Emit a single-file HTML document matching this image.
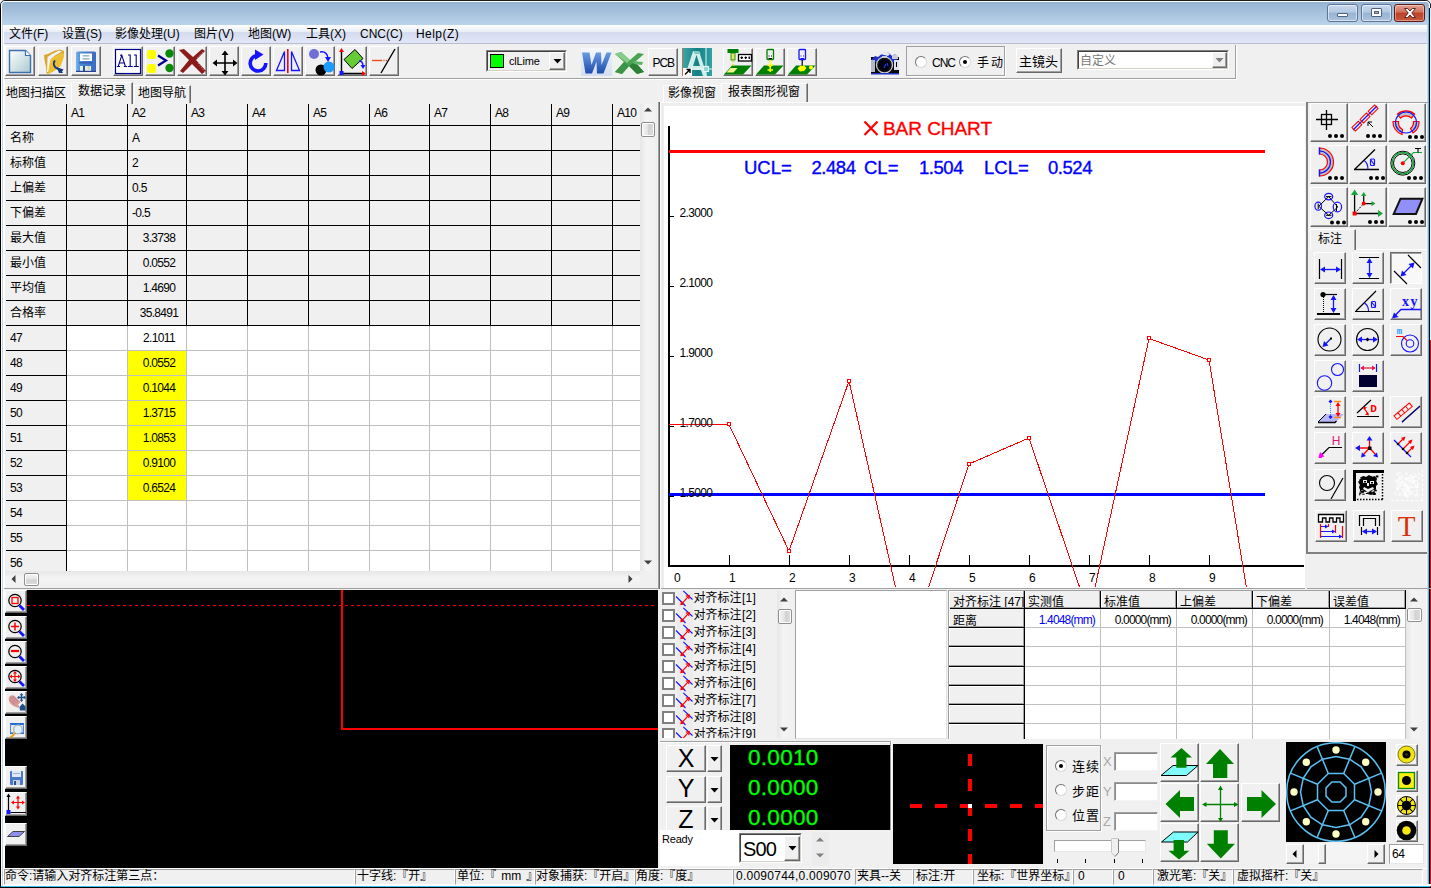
<!DOCTYPE html>
<html lang="zh"><head><meta charset="utf-8"><title>Measurement</title>
<style>
html,body{margin:0;padding:0}
body{width:1431px;height:888px;overflow:hidden;position:relative;background:#f0f0f0;font-family:"Liberation Sans","Noto Sans CJK SC",sans-serif;font-size:12px;color:#000}
body div{position:absolute;box-sizing:border-box}
svg{position:absolute;overflow:visible}
.t{white-space:nowrap}
.btn{background:#f0f0f0;border:1px solid;border-color:#fff #696969 #696969 #fff;box-shadow:inset -1px -1px 0 #a0a0a0}
.sunk{border:1px solid;border-color:#a0a0a0 #fff #fff #a0a0a0}

</style></head>
<body>
<!-- window frame -->
<div style="left:0px;top:0px;width:1431px;height:888px;background:#bad2ea;border-radius:5px 5px 0 0;border:1px solid #1a1c1e;"></div>
<div style="left:1px;top:1px;width:1429px;height:886px;border-radius:4px 4px 0 0;border:1px solid #fff;background:linear-gradient(#95b3d2 0,#a8c2dd 11px,#bad2ea 23px,#bad2ea 100%);"></div>
<div style="left:3px;top:25px;width:1424px;height:861px;background:#f0f0f0;"></div>
<div style="left:1426px;top:25px;width:1px;height:861px;background:#f8f9fd;"></div>
<div style="left:1427px;top:25px;width:1px;height:861px;background:#ccd6ec;"></div>
<div style="left:1428px;top:8px;width:1px;height:880px;background:#38c4f2;"></div>
<div style="left:1429px;top:8px;width:1px;height:880px;background:#000;"></div>
<div style="left:1430px;top:8px;width:1px;height:332px;background:#e8eef8;"></div>
<div style="left:1430px;top:340px;width:1px;height:548px;background:#f00000;"></div>
<div style="left:0px;top:884px;width:1431px;height:2px;background:#fff;"></div>
<div style="left:0px;top:886px;width:1430px;height:1px;background:#38c4f2;"></div>
<div style="left:0px;top:887px;width:1431px;height:1px;background:#000;"></div>
<div style="left:0px;top:8px;width:1px;height:880px;background:#000;"></div>
<div style="left:1px;top:8px;width:1px;height:878px;background:#fff;"></div>
<div style="left:2px;top:25px;width:1px;height:861px;background:#c2d4ea;"></div>
<div style="left:3px;top:25px;width:2px;height:861px;background:#fff;"></div>
<div style="left:1327px;top:4px;width:31px;height:18px;border:1px solid #5d7594;border-radius:3px;background:linear-gradient(#c9d9ec 0,#b3c8e2 45%,#98b3d4 50%,#a9c2df 100%);box-shadow:inset 0 0 0 1px rgba(255,255,255,.55);"></div>
<div style="left:1337px;top:13px;width:11px;height:4px;background:#fafcff;border:1px solid #51627a;border-radius:1px;"></div>
<div style="left:1361px;top:4px;width:31px;height:18px;border:1px solid #5d7594;border-radius:3px;background:linear-gradient(#c9d9ec 0,#b3c8e2 45%,#98b3d4 50%,#a9c2df 100%);box-shadow:inset 0 0 0 1px rgba(255,255,255,.55);"></div>
<div style="left:1371px;top:8px;width:11px;height:9px;background:#fafcff;border:1px solid #51627a;border-radius:1px;"></div>
<div style="left:1374px;top:11px;width:5px;height:3px;background:#9fb6d3;border:1px solid #51627a;"></div>
<div style="left:1394px;top:4px;width:31px;height:18px;border:1px solid #5b1c14;border-radius:3px;background:linear-gradient(#e2a193 0,#d0705c 45%,#bd4027 50%,#c9583b 100%);box-shadow:inset 0 0 0 1px rgba(255,255,255,.4);"></div>
<svg style="left:1402px;top:7px" width="16" height="12" viewBox="0 0 16 12"><path d="M2.5 1.5h3.2L8 4l2.3-2.5h3.2L9.8 6l3.7 4.5h-3.2L8 8 5.700 10.500H2.500L6.200 6z" fill="#fff" stroke="#5a2a22" stroke-width="1"/></svg>
<!-- menu bar -->
<div style="left:4px;top:25px;width:1423px;height:19px;background:linear-gradient(#fefeff 0,#e9eef6 7px,#d4dbee 7px,#e2e7f8 18px,#b9bdd0 18px,#b9bdd0 19px);"></div>
<div class="t m" style="left:9px;top:27px;font-size:12px;line-height:14px;line-height:15px;">文件(F)</div>
<div class="t m" style="left:62px;top:27px;font-size:12px;line-height:14px;line-height:15px;">设置(S)</div>
<div class="t m" style="left:115px;top:27px;font-size:12px;line-height:14px;line-height:15px;">影像处理(U)</div>
<div class="t m" style="left:194px;top:27px;font-size:12px;line-height:14px;line-height:15px;">图片(V)</div>
<div class="t m" style="left:248px;top:27px;font-size:12px;line-height:14px;line-height:15px;">地图(W)</div>
<div class="t m" style="left:306px;top:27px;font-size:12px;line-height:14px;line-height:15px;">工具(X)</div>
<div class="t m" style="left:360px;top:27px;font-size:12px;line-height:14px;line-height:15px;">CNC(C)</div>
<div class="t m" style="left:416px;top:27px;font-size:12px;line-height:14px;line-height:15px;letter-spacing:0.45px;">Help(Z)</div>
<!-- toolbar -->
<div style="left:4px;top:78px;width:1232px;height:1px;background:#a0a0a0;"></div>
<div style="left:4px;top:79px;width:1232px;height:1px;background:#fff;"></div>
<div style="left:1235px;top:45px;width:1px;height:34px;background:#a0a0a0;"></div>
<div style="left:1236px;top:45px;width:1px;height:35px;background:#fff;"></div>
<div class="btn" style="left:5px;top:46px;width:30px;height:30px;"></div>
<svg style="left:5px;top:46px" width="30" height="30" viewBox="0 0 30 30"><defs><linearGradient id="gnew" x1="0" y1="0" x2="1" y2="1"><stop offset="0" stop-color="#fff"/><stop offset="1" stop-color="#a9c9cf"/></linearGradient></defs><path d="M4.500 4.500H20.500L25.500 9.500V26.500H4.500Z" fill="url(#gnew)" stroke="#3b6fae" stroke-width="1.4"/><path d="M20.500 4.500V9.500H25.500" fill="#fff" stroke="#3b6fae" stroke-width="1.2"/></svg>
<div class="btn" style="left:38px;top:46px;width:30px;height:30px;"></div>
<svg style="left:38px;top:46px" width="30" height="30" viewBox="0 0 30 30"><path d="M6 9L10 8L16 5L22 3.500L26 5L25.500 12L22.500 20L16 25L10 28L8.500 27L8 21L6.500 14Z" fill="#dca528"/><path d="M9.500 11L14 8L21 4.500L24 5.500L17 9.500L13 13L10.500 26L9 26Z" fill="#eef4fb"/><path d="M12.500 13.500L18 10L24 7L25.500 8L25 13L22 20L16 25L10 28L11 20Z" fill="#f0c634"/><path d="M14 14L24 8.500L24.500 12L21.500 19L15 24.500L11 26.500Z" fill="#e9b92c" opacity=".7"/><path d="M17 14.500C14.500 17 15.500 21 20 23" fill="none" stroke="#173a85" stroke-width="2"/><path d="M18.500 21L25.500 23.500L24 25.500L25 27L21 27L20 24.500Z" fill="#173a85"/></svg>
<div class="btn" style="left:71px;top:46px;width:30px;height:30px;"></div>
<svg style="left:71px;top:46px" width="30" height="30" viewBox="0 0 30 30"><defs><linearGradient id="gsv" x1="0" y1="0" x2="1" y2="0"><stop offset="0" stop-color="#74b4ee"/><stop offset=".25" stop-color="#4a86d4"/><stop offset="1" stop-color="#3a6cc4"/></linearGradient></defs><rect x="5" y="5.500" width="20" height="20.500" rx="1.500" fill="url(#gsv)"/><rect x="9" y="7.500" width="12" height="7.500" fill="#fff"/><rect x="11.500" y="9" width="7" height="1.600" fill="#9fbcc4"/><rect x="11.500" y="12" width="7" height="1.600" fill="#9fbcc4"/><rect x="8" y="16" width="14" height="1.500" fill="#3560b4"/><rect x="9" y="20" width="11" height="5" fill="#e8efe0"/><rect x="12" y="20" width="2" height="6" fill="#2456b0"/><rect x="16.500" y="20" width="2.500" height="4" fill="#d6d8b0"/><rect x="5" y="24.800" width="20" height="1.200" fill="#2a3f90"/></svg>
<div class="btn" style="left:113px;top:46px;width:30px;height:30px;"></div>
<svg style="left:113px;top:46px" width="30" height="30" viewBox="0 0 30 30"><rect x="2.500" y="3.500" width="25" height="24" fill="#fff" stroke="#00008b" stroke-width="1.200"/><path d="M5.200 20.500L8.800 9.200L12.400 20.500M6.500 17H11.200M3.800 20.500H7M10.800 20.500H14M7 9.200H8.800M15 9H17.200V20.500M14.800 20.500H19.800M21 9H23.200V20.500M20.800 20.500H25.800" fill="none" stroke="#00008b" stroke-width="1.100"/></svg>
<div class="btn" style="left:145px;top:46px;width:30px;height:30px;"></div>
<svg style="left:145px;top:46px" width="30" height="30" viewBox="0 0 30 30"><rect x="2" y="4" width="9" height="9" rx="2.500" fill="#ff0"/><rect x="2" y="18" width="9" height="9" rx="2.500" fill="#ff0"/><circle cx="24.500" cy="7.500" r="4.200" fill="#0a8a0a"/><circle cx="24.500" cy="22" r="4.200" fill="#0a8a0a"/><path d="M13 9.500L21 14.500L13 19.500" fill="none" stroke="#00008b" stroke-width="2.200"/></svg>
<div class="btn" style="left:177px;top:46px;width:30px;height:30px;"></div>
<svg style="left:177px;top:46px" width="30" height="30" viewBox="0 0 30 30"><path d="M2 4L7 3L16 11L25 3L28 5L19 14L29 25L25 28L15 18L6 27L3 25L12 14Z" fill="#8b1a1a"/><path d="M20 12l8-8M21 17l7 9" stroke="#b9a3a0" stroke-width="1" stroke-dasharray="1 1.500"/></svg>
<div class="btn" style="left:209px;top:46px;width:30px;height:30px;"></div>
<svg style="left:209px;top:46px" width="30" height="30" viewBox="0 0 30 30"><path d="M16 8V26M7 17H25" stroke="#000" stroke-width="1.600"/><path d="M16 4.500L12.500 9H19.500ZM16 29.500L12.500 25H19.500ZM3.500 17L8 13.500V20.500ZM28.500 17L24 13.500V20.500Z" fill="#000"/></svg>
<div class="btn" style="left:241px;top:46px;width:30px;height:30px;"></div>
<svg style="left:241px;top:46px" width="30" height="30" viewBox="0 0 30 30"><path d="M16 9.500A7.800 7.800 0 1 0 24.800 17" fill="none" stroke="#1414ff" stroke-width="3.600"/><path d="M14 3.500l8.500 5-8.500 5.500z" fill="#1414ff"/></svg>
<div class="btn" style="left:273px;top:46px;width:30px;height:30px;"></div>
<svg style="left:273px;top:46px" width="30" height="30" viewBox="0 0 30 30"><path d="M11.500 5.500V24.500H3.500ZM18.500 5.500V24.500H26.500Z" fill="none" stroke="#1414ff" stroke-width="1.300"/><rect x="14" y="3" width="1.600" height="24" fill="#f00"/></svg>
<div class="btn" style="left:305px;top:46px;width:30px;height:30px;"></div>
<svg style="left:305px;top:46px" width="30" height="30" viewBox="0 0 30 30"><circle cx="9" cy="8" r="5" fill="#6f6fd6"/><circle cx="16" cy="24" r="5.500" fill="#000"/><circle cx="24" cy="21" r="5.500" fill="#1e9bff"/><path d="M15 6c5-1 8 2 8 7" fill="none" stroke="#1414ff" stroke-width="1.600"/><path d="M20 11l3 5 3-5z" fill="#1414ff"/></svg>
<div class="btn" style="left:337px;top:46px;width:30px;height:30px;"></div>
<svg style="left:337px;top:46px" width="30" height="30" viewBox="0 0 30 30"><path d="M4.500 6V27.500H27" fill="none" stroke="#000" stroke-width="1.400"/><path d="M4.500 2l-2.500 4h5zM29 27.500l-4-2.500v5z" fill="#f00"/><rect x="2.500" y="25" width="4" height="4" fill="#1414ff"/><path d="M18 3.500L26 12.500L15 22.500L7 13.500Z" fill="#66cc33" stroke="#000" stroke-width="1"/><path d="M22 15c3 0 4 2 4 5" fill="none" stroke="#1414ff" stroke-width="1.400"/><path d="M23.500 19l2.500 4 2.500-4z" fill="#1414ff"/></svg>
<div class="btn" style="left:369px;top:46px;width:30px;height:30px;"></div>
<svg style="left:369px;top:46px" width="30" height="30" viewBox="0 0 30 30"><path d="M12 27L26 3" stroke="#000" stroke-width="1.400"/><path d="M3 14.500H12" stroke="#e8501a" stroke-width="1.400"/><path d="M12 14.500H19" stroke="#e8501a" stroke-width="1.400" stroke-dasharray="1.200 1.200"/></svg>
<div style="left:486px;top:50px;width:81px;height:22px;border:1px solid;border-color:#808080 #fff #fff #808080;background:#f0f0f0;"></div>
<div style="left:487px;top:51px;width:79px;height:20px;border:1px solid;border-color:#404040 #d4d0c8 #d4d0c8 #404040;background:#f0f0f0;"></div>
<div style="left:490px;top:54px;width:14px;height:14px;background:#0f0;border:1px solid #000;"></div>
<div class="t" style="left:509px;top:55px;font-size:11px;line-height:13px;letter-spacing:-0.2px;">clLime</div>
<div class="btn" style="left:549px;top:52px;width:16px;height:18px;"></div>
<svg style="left:553px;top:59px" width="9" height="5"><path d="M0.500 0h8L4.500 4.500z" fill="#000"/></svg>
<svg style="left:581px;top:48px" width="31" height="28" viewBox="0 0 31 28"><defs><linearGradient id="gw" x1="0" y1="0" x2="0" y2="1"><stop offset="0" stop-color="#6d9be0"/><stop offset="1" stop-color="#1d4cae"/></linearGradient><linearGradient id="gwb" x1="0" y1="0" x2="0" y2="1"><stop offset="0" stop-color="#f4f7fc"/><stop offset="1" stop-color="#d5deef"/></linearGradient></defs><rect x="0" y="0" width="31" height="28" fill="url(#gwb)"/><path d="M1 4.500H8.500L10.500 17L15 4.500H20L20.500 17L25.500 4.500H30.500L22.500 25.500H16L15.500 13.500L11 25.500H4.500Z" fill="url(#gw)"/></svg>
<svg style="left:613px;top:48px" width="32" height="28" viewBox="0 0 32 28"><rect x="0" y="0" width="32" height="28" fill="#eef3ec" opacity=".7"/><path d="M2 6L8 4L17 12L25 5L31 6L22 14L31 24L24 26L16 18L9 26L2 24L11 14Z" fill="#4aa352"/><path d="M2 6L8 4L17 12L14 15Z" fill="#86cc8b"/><path d="M22 14L31 24L24 26L16 18Z" fill="#2d7f38"/><path d="M16 18L9 26L2 24L11 14Z" fill="#3c9446"/><path d="M20 13L30 14L29 17L21 16Z" fill="#5fb567"/></svg>
<div class="btn" style="left:648px;top:48px;width:30px;height:28px;"></div>
<div class="t" style="left:652.5px;top:56px;font-size:12px;line-height:14px;letter-spacing:-1.1px;">PCB</div>
<svg style="left:682px;top:48px" width="30" height="28" viewBox="0 0 30 28"><defs><linearGradient id="gt" x1="0" y1="0" x2="1" y2="0"><stop offset="0" stop-color="#3aa7a6"/><stop offset=".5" stop-color="#157f83"/><stop offset="1" stop-color="#2fa3a5"/></linearGradient></defs><rect x="1" y="0" width="29" height="28" fill="url(#gt)"/><rect x="0" y="0" width="1" height="28" fill="#b07850"/><path d="M3 28L11 3h6l8 25h-4l-2-6h-9l-2 6z M11 18h7L14.500 7z" fill="#d2eeec" fill-rule="evenodd"/><path d="M11 3h6l2 3h-6z" fill="#7fc9c7"/><path d="M24 0v28M14 21h16" stroke="#e4f5f4" stroke-width="1"/><rect x="21.500" y="18.500" width="5" height="5" fill="#8fd3d2" stroke="#e4f5f4" stroke-width="1.200"/><rect x="1" y="20" width="9" height="8" fill="#fff"/><path d="M3 26.500l5-5M4.500 21.500H8V25" stroke="#000" stroke-width="1.400" fill="none"/></svg>
<div class="btn" style="left:723px;top:48px;width:30px;height:28px;"></div>
<svg style="left:723px;top:48px" width="30" height="28" viewBox="0 0 30 28"><path d="M1 26.500L9 17.500H28.500L20 26.500Z" fill="#008000"/><rect x="4.500" y="1" width="11" height="4" fill="#008000"/><rect x="8" y="5" width="4" height="7" fill="#e6e65a" stroke="#008000" stroke-width=".8"/><rect x="15.500" y="6.500" width="13" height="6.500" fill="#fff" stroke="#000" stroke-width="1.300"/><path d="M17.500 9.700h2.500m1.500 0h2.500m1.500 0h1.500M18.700 8.500v2.500M22.700 8.500v2.500M26.200 8.500v2.500" stroke="#000" stroke-width="1.200"/><path d="M3.500 24.500l4-4.500h7l-4 4.500z" fill="#f4f48a"/><path d="M8.500 13h3v1.500h-3zM8.500 16h3v1.500h-3z" fill="#e6e65a"/></svg>
<div class="btn" style="left:755px;top:48px;width:30px;height:28px;"></div>
<svg style="left:755px;top:48px" width="30" height="28" viewBox="0 0 30 28"><path d="M1 26.500L9 17.500H28.500L20 26.500Z" fill="#008000"/><rect x="12" y="1.500" width="6.500" height="10" rx=".8" fill="#f0f0f0" stroke="#008000" stroke-width="1.300"/><path d="M13.500 8h1M16 8h1M13.500 10.500h3.500" stroke="#000" stroke-width="1"/><path d="M15.200 12v12M12.500 16.500l2.700 2 2.700-2M12.500 22h5.500" stroke="#ff0" stroke-width="1.500" fill="none"/></svg>
<div class="btn" style="left:787px;top:48px;width:30px;height:28px;"></div>
<svg style="left:787px;top:48px" width="30" height="28" viewBox="0 0 30 28"><path d="M1 26.500L9 17.500H28.500L20 26.500Z" fill="#008000"/><rect x="12" y="1.500" width="6.500" height="10" rx=".8" fill="#f0f0f0" stroke="#1414ff" stroke-width="1.300"/><path d="M13.500 8h1M16 8h1M13.500 10.500h3.500" stroke="#1414ff" stroke-width="1"/><path d="M15.200 12v6" stroke="#000" stroke-width="1.200"/><path d="M13 18l4-0.500 2.500 2.500-2.500 3-4 0.500-2.500-3z" fill="#ff0"/><circle cx="24" cy="19.500" r="2" fill="#ff0"/></svg>
<svg style="left:869px;top:48px" width="31" height="28" viewBox="0 0 31 28"><path d="M2 9H30V26H2Z" fill="#0a0a0a"/><path d="M2 12L6 8l3 1 6-5 5 1 3 3 3-2 2 2v6H2z" fill="#1c2fc0"/><path d="M11 6l5-3 5 3-2 2z" fill="#e9ebf2"/><path d="M23 8l3-2 3 2v3h-6z" fill="#c9ccd8"/><rect x="2" y="12" width="4" height="12" fill="#b4b8c6"/><rect x="25" y="12" width="5" height="10" fill="#dfe1ea"/><path d="M27.500 14v5" stroke="#000" stroke-width="1"/><circle cx="15.500" cy="17" r="8" fill="#101010" stroke="#c8ccd6" stroke-width="1.300"/><circle cx="15.500" cy="17" r="5.500" fill="#000010"/><path d="M15 20l2-4M18 15l1 3" stroke="#2034d8" stroke-width="1.300"/><rect x="13" y="8" width="5" height="2" fill="#c8ccd6"/><rect x="2" y="25" width="28" height="1.500" fill="#1c2fc0"/></svg>
<div style="left:906px;top:46px;width:99px;height:30px;border:1px solid #a0a0a0;box-shadow:1px 1px 0 #fff;"></div>
<div style="left:915px;top:56px;width:12px;height:12px;border-radius:6px;background:#fff;border:1px solid;border-color:#707070 #d8d8d8 #d8d8d8 #707070;"></div>
<div style="left:959px;top:56px;width:12px;height:12px;border-radius:6px;background:#fff;border:1px solid;border-color:#707070 #d8d8d8 #d8d8d8 #707070;"></div>
<div style="left:963px;top:60px;width:4px;height:4px;border-radius:2px;background:#000;"></div>
<div class="t" style="left:932px;top:56px;font-size:12px;line-height:14px;letter-spacing:-1px;">CNC</div>
<div class="t" style="left:977px;top:56px;font-size:12px;line-height:14px;">手</div>
<div class="t" style="left:991px;top:56px;font-size:12px;line-height:14px;">动</div>
<div class="btn" style="left:1016px;top:48px;width:46px;height:25px;"></div>
<div class="t" style="left:1019px;top:54px;font-size:13px;line-height:15px;">主</div>
<div class="t" style="left:1032px;top:54px;font-size:13px;line-height:15px;">镜</div>
<div class="t" style="left:1045px;top:54px;font-size:13px;line-height:15px;">头</div>
<div style="left:1077px;top:50px;width:152px;height:20px;border:1px solid;border-color:#808080 #fff #fff #808080;background:#fff;"></div>
<div style="left:1078px;top:51px;width:150px;height:18px;border:1px solid;border-color:#404040 #d4d0c8 #d4d0c8 #404040;background:#fff;"></div>
<div class="t m" style="left:1080px;top:54px;font-size:12px;line-height:14px;color:#7a7a7a;">自定义</div>
<div class="btn" style="left:1212px;top:52px;width:15px;height:16px;"></div>
<svg style="left:1215px;top:58px" width="9" height="5"><path d="M0.500 0h8L4.500 4.500z" fill="#808080"/></svg>
<!-- left tabs -->
<div style="left:4px;top:85px;width:67px;height:18px;background:#f0f0f0;border-top:1px solid #fcfcfc;border-left:1px solid #fcfcfc;"></div>
<div class="t" style="left:6px;top:86px;font-size:12px;line-height:14px;">地图扫描区</div>
<div style="left:134px;top:85px;width:57px;height:18px;background:#f0f0f0;border-top:1px solid #fcfcfc;border-left:1px solid #fcfcfc;border-right:1px solid #696969;box-shadow:inset -1px 0 0 #a0a0a0;"></div>
<div class="t" style="left:138px;top:86px;font-size:12px;line-height:14px;">地图导航</div>
<div style="left:71px;top:82px;width:62px;height:22px;background:#f0f0f0;border-top:1px solid #fcfcfc;border-left:1px solid #fcfcfc;border-right:1px solid #696969;box-shadow:inset -1px 0 0 #a0a0a0;"></div>
<div class="t" style="left:78px;top:84px;font-size:12px;line-height:14px;">数据记录</div>
<!-- data grid -->
<div style="left:5px;top:104px;width:635px;height:467px;background:#fff;"></div>
<div style="left:5px;top:104px;width:635px;height:222px;background:#f0f0f0;"></div>
<div style="left:5px;top:104px;width:62px;height:467px;background:#f0f0f0;"></div>
<div style="left:128px;top:351px;width:58px;height:149px;background:#ff0;"></div>
<svg style="left:0;top:0" width="660" height="580" shape-rendering="crispEdges"><path d="M6 125.5H640" stroke="#000"/><path d="M6 150.5H640" stroke="#000"/><path d="M6 175.5H640" stroke="#000"/><path d="M6 200.5H640" stroke="#000"/><path d="M6 225.5H640" stroke="#000"/><path d="M6 250.5H640" stroke="#000"/><path d="M6 275.5H640" stroke="#000"/><path d="M6 300.5H640" stroke="#000"/><path d="M6 325.5H640" stroke="#000"/><path d="M67 350.5H640" stroke="#c0c0c0"/><path d="M6 350.5H67" stroke="#000"/><path d="M67 375.5H640" stroke="#c0c0c0"/><path d="M6 375.5H67" stroke="#000"/><path d="M67 400.5H640" stroke="#c0c0c0"/><path d="M6 400.5H67" stroke="#000"/><path d="M67 425.5H640" stroke="#c0c0c0"/><path d="M6 425.5H67" stroke="#000"/><path d="M67 450.5H640" stroke="#c0c0c0"/><path d="M6 450.5H67" stroke="#000"/><path d="M67 475.5H640" stroke="#c0c0c0"/><path d="M6 475.5H67" stroke="#000"/><path d="M67 500.5H640" stroke="#c0c0c0"/><path d="M6 500.5H67" stroke="#000"/><path d="M67 525.5H640" stroke="#c0c0c0"/><path d="M6 525.5H67" stroke="#000"/><path d="M67 550.5H640" stroke="#c0c0c0"/><path d="M6 550.5H67" stroke="#000"/><path d="M66.5 104V326" stroke="#000"/><path d="M66.5 326V571" stroke="#000"/><path d="M127.5 104V326" stroke="#000"/><path d="M127.5 326V571" stroke="#c0c0c0"/><path d="M186.5 104V326" stroke="#000"/><path d="M186.5 326V571" stroke="#c0c0c0"/><path d="M247.5 104V326" stroke="#000"/><path d="M247.5 326V571" stroke="#c0c0c0"/><path d="M308.5 104V326" stroke="#000"/><path d="M308.5 326V571" stroke="#c0c0c0"/><path d="M369.5 104V326" stroke="#000"/><path d="M369.5 326V571" stroke="#c0c0c0"/><path d="M429.5 104V326" stroke="#000"/><path d="M429.5 326V571" stroke="#c0c0c0"/><path d="M490.5 104V326" stroke="#000"/><path d="M490.5 326V571" stroke="#c0c0c0"/><path d="M551.5 104V326" stroke="#000"/><path d="M551.5 326V571" stroke="#c0c0c0"/><path d="M612.5 104V326" stroke="#000"/><path d="M612.5 326V571" stroke="#c0c0c0"/></svg>
<div class="t" style="left:71px;top:106px;font-size:12px;line-height:14px;letter-spacing:-0.7px;">A1</div>
<div class="t" style="left:132px;top:106px;font-size:12px;line-height:14px;letter-spacing:-0.7px;">A2</div>
<div class="t" style="left:191px;top:106px;font-size:12px;line-height:14px;letter-spacing:-0.7px;">A3</div>
<div class="t" style="left:252px;top:106px;font-size:12px;line-height:14px;letter-spacing:-0.7px;">A4</div>
<div class="t" style="left:313px;top:106px;font-size:12px;line-height:14px;letter-spacing:-0.7px;">A5</div>
<div class="t" style="left:374px;top:106px;font-size:12px;line-height:14px;letter-spacing:-0.7px;">A6</div>
<div class="t" style="left:434px;top:106px;font-size:12px;line-height:14px;letter-spacing:-0.7px;">A7</div>
<div class="t" style="left:495px;top:106px;font-size:12px;line-height:14px;letter-spacing:-0.7px;">A8</div>
<div class="t" style="left:556px;top:106px;font-size:12px;line-height:14px;letter-spacing:-0.7px;">A9</div>
<div class="t" style="left:617px;top:106px;font-size:12px;line-height:14px;letter-spacing:-0.7px;">A10</div>
<div class="t" style="left:10px;top:131px;font-size:12px;line-height:14px;">名称</div>
<div class="t" style="left:10px;top:156px;font-size:12px;line-height:14px;">标称值</div>
<div class="t" style="left:10px;top:181px;font-size:12px;line-height:14px;">上偏差</div>
<div class="t" style="left:10px;top:206px;font-size:12px;line-height:14px;">下偏差</div>
<div class="t" style="left:10px;top:231px;font-size:12px;line-height:14px;">最大值</div>
<div class="t" style="left:10px;top:256px;font-size:12px;line-height:14px;">最小值</div>
<div class="t" style="left:10px;top:281px;font-size:12px;line-height:14px;">平均值</div>
<div class="t" style="left:10px;top:306px;font-size:12px;line-height:14px;">合格率</div>
<div class="t" style="left:132px;top:131px;font-size:12px;line-height:14px;letter-spacing:-0.67px;">A</div>
<div class="t" style="left:132px;top:156px;font-size:12px;line-height:14px;letter-spacing:-0.67px;">2</div>
<div class="t" style="left:132px;top:181px;font-size:12px;line-height:14px;letter-spacing:-0.67px;">0.5</div>
<div class="t" style="left:132px;top:206px;font-size:12px;line-height:14px;letter-spacing:-0.67px;">-0.5</div>
<div class="t" style="left:128px;top:231px;width:62px;text-align:center;font-size:12px;line-height:14px;letter-spacing:-0.67px">3.3738</div>
<div class="t" style="left:128px;top:256px;width:62px;text-align:center;font-size:12px;line-height:14px;letter-spacing:-0.67px">0.0552</div>
<div class="t" style="left:128px;top:281px;width:62px;text-align:center;font-size:12px;line-height:14px;letter-spacing:-0.67px">1.4690</div>
<div class="t" style="left:128px;top:306px;width:62px;text-align:center;font-size:12px;line-height:14px;letter-spacing:-0.67px">35.8491</div>
<div class="t" style="left:10px;top:331px;font-size:12px;line-height:14px;letter-spacing:-0.67px;">47</div>
<div class="t" style="left:10px;top:356px;font-size:12px;line-height:14px;letter-spacing:-0.67px;">48</div>
<div class="t" style="left:10px;top:381px;font-size:12px;line-height:14px;letter-spacing:-0.67px;">49</div>
<div class="t" style="left:10px;top:406px;font-size:12px;line-height:14px;letter-spacing:-0.67px;">50</div>
<div class="t" style="left:10px;top:431px;font-size:12px;line-height:14px;letter-spacing:-0.67px;">51</div>
<div class="t" style="left:10px;top:456px;font-size:12px;line-height:14px;letter-spacing:-0.67px;">52</div>
<div class="t" style="left:10px;top:481px;font-size:12px;line-height:14px;letter-spacing:-0.67px;">53</div>
<div class="t" style="left:10px;top:506px;font-size:12px;line-height:14px;letter-spacing:-0.67px;">54</div>
<div class="t" style="left:10px;top:531px;font-size:12px;line-height:14px;letter-spacing:-0.67px;">55</div>
<div class="t" style="left:10px;top:556px;font-size:12px;line-height:14px;letter-spacing:-0.67px;">56</div>
<div class="t" style="left:128px;top:331px;width:62px;text-align:center;font-size:12px;line-height:14px;letter-spacing:-0.67px">2.1011</div>
<div class="t" style="left:128px;top:356px;width:62px;text-align:center;font-size:12px;line-height:14px;letter-spacing:-0.67px">0.0552</div>
<div class="t" style="left:128px;top:381px;width:62px;text-align:center;font-size:12px;line-height:14px;letter-spacing:-0.67px">0.1044</div>
<div class="t" style="left:128px;top:406px;width:62px;text-align:center;font-size:12px;line-height:14px;letter-spacing:-0.67px">1.3715</div>
<div class="t" style="left:128px;top:431px;width:62px;text-align:center;font-size:12px;line-height:14px;letter-spacing:-0.67px">1.0853</div>
<div class="t" style="left:128px;top:456px;width:62px;text-align:center;font-size:12px;line-height:14px;letter-spacing:-0.67px">0.9100</div>
<div class="t" style="left:128px;top:481px;width:62px;text-align:center;font-size:12px;line-height:14px;letter-spacing:-0.67px">0.6524</div>
<div style="left:640px;top:104px;width:16px;height:467px;background:linear-gradient(90deg,#e6e6e6,#f4f4f4 40%,#f0f0f0);"></div>
<svg style="left:644px;top:107px" width="9" height="9"><path d="M0 4.500L4 0.500L8 4.500Z" fill="#404040"/></svg>
<svg style="left:644px;top:560px" width="9" height="9"><path d="M0 0.500H8L4 4.500Z" fill="#404040"/></svg>
<div style="left:641px;top:122px;width:14px;height:15px;border:1px solid #8e8e8e;border-radius:2px;background:linear-gradient(90deg,#f6f6f6 0,#e4e4e4 45%,#d2d2d2 55%,#dcdcdc 100%);box-shadow:inset 0 0 0 1px #fff;"></div>
<div style="left:5px;top:571px;width:635px;height:17px;background:linear-gradient(#e6e6e6,#f4f4f4 40%,#f0f0f0);"></div>
<svg style="left:11px;top:575px" width="9" height="9"><path d="M4.500 0L0.500 4L4.500 8Z" fill="#404040"/></svg>
<svg style="left:628px;top:575px" width="9" height="9"><path d="M0.500 0L4.500 4L0.500 8Z" fill="#404040"/></svg>
<div style="left:24px;top:573px;width:15px;height:13px;border:1px solid #8e8e8e;border-radius:2px;background:linear-gradient(180deg,#f6f6f6 0,#e4e4e4 45%,#d2d2d2 55%,#dcdcdc 100%);box-shadow:inset 0 0 0 1px #fff;"></div>
<div style="left:640px;top:571px;width:16px;height:17px;background:#f0f0f0;"></div>
<!-- chart panel -->
<div style="left:658px;top:102px;width:1px;height:487px;background:#a0a0a0;"></div>
<div style="left:659px;top:102px;width:1px;height:487px;background:#696969;"></div>
<div style="left:660px;top:102px;width:1px;height:487px;background:#fff;"></div>
<div style="left:663px;top:85px;width:58px;height:18px;background:#f0f0f0;border-top:1px solid #fcfcfc;border-left:1px solid #fcfcfc;"></div>
<div class="t" style="left:668px;top:86px;font-size:12px;line-height:14px;">影像视窗</div>
<div style="left:721px;top:83px;width:87px;height:21px;background:#f0f0f0;border-top:1px solid #fcfcfc;border-left:1px solid #fcfcfc;border-right:1px solid #696969;box-shadow:inset -1px 0 0 #a0a0a0;"></div>
<div class="t" style="left:728px;top:85px;font-size:12px;line-height:14px;">报表图形视窗</div>
<div style="left:660px;top:102px;width:646px;height:1px;background:#fff;"></div>
<div style="left:661px;top:103px;width:645px;height:485px;background:#ededed;"></div>
<div style="left:664px;top:106px;width:642px;height:482px;background:#fff;"></div>
<div style="left:661px;top:588px;width:770px;height:1px;background:#a0a0a0;"></div>
<div style="left:4px;top:588px;width:654px;height:1px;background:#a0a0a0;"></div>
<svg style="left:661px;top:105px;overflow:hidden" width="644" height="482" viewBox="661 105 644 482"><path d="M669 126V567" stroke="#000" stroke-width="2"/><path d="M668 566H1304" stroke="#000" stroke-width="2"/><path d="M670 216.5H674" stroke="#000" stroke-width="1"/><path d="M670 286.5H674" stroke="#000" stroke-width="1"/><path d="M670 356.5H674" stroke="#000" stroke-width="1"/><path d="M670 426.5H674" stroke="#000" stroke-width="1"/><path d="M670 496.5H674" stroke="#000" stroke-width="1"/><path d="M729.5 555V565" stroke="#000" stroke-width="1"/><path d="M789.5 555V565" stroke="#000" stroke-width="1"/><path d="M849.5 555V565" stroke="#000" stroke-width="1"/><path d="M909.5 555V565" stroke="#000" stroke-width="1"/><path d="M969.5 555V565" stroke="#000" stroke-width="1"/><path d="M1029.5 555V565" stroke="#000" stroke-width="1"/><path d="M1089.5 555V565" stroke="#000" stroke-width="1"/><path d="M1149.5 555V565" stroke="#000" stroke-width="1"/><path d="M1209.5 555V565" stroke="#000" stroke-width="1"/><path d="M669 151.500H1265" stroke="#f00" stroke-width="3"/><path d="M669 494.500H1265" stroke="#00f" stroke-width="3"/><polyline points="669,424.5 729,424.5 789,551 849,381 909,647 969,464 1029,438 1089,615 1149,338.5 1209,360 1269,725" fill="none" stroke="#f00" stroke-width="1" shape-rendering="crispEdges"/><rect x="727.5" y="422.5" width="3" height="3" fill="#fff" stroke="#f00" stroke-width="1"/><rect x="787.5" y="549.5" width="3" height="3" fill="#fff" stroke="#f00" stroke-width="1"/><rect x="847.5" y="379.5" width="3" height="3" fill="#fff" stroke="#f00" stroke-width="1"/><rect x="907.5" y="645.5" width="3" height="3" fill="#fff" stroke="#f00" stroke-width="1"/><rect x="967.5" y="462.5" width="3" height="3" fill="#fff" stroke="#f00" stroke-width="1"/><rect x="1027.5" y="436.5" width="3" height="3" fill="#fff" stroke="#f00" stroke-width="1"/><rect x="1087.5" y="613.5" width="3" height="3" fill="#fff" stroke="#f00" stroke-width="1"/><rect x="1147.5" y="336.5" width="3" height="3" fill="#fff" stroke="#f00" stroke-width="1"/><rect x="1207.5" y="358.5" width="3" height="3" fill="#fff" stroke="#f00" stroke-width="1"/><rect x="1267.5" y="723.5" width="3" height="3" fill="#fff" stroke="#f00" stroke-width="1"/></svg>
<div class="t" style="left:679.5px;top:206px;font-size:12px;line-height:14px;letter-spacing:-0.67px;">2.3000</div>
<div class="t" style="left:679.5px;top:276px;font-size:12px;line-height:14px;letter-spacing:-0.67px;">2.1000</div>
<div class="t" style="left:679.5px;top:346px;font-size:12px;line-height:14px;letter-spacing:-0.67px;">1.9000</div>
<div class="t" style="left:679.5px;top:416px;font-size:12px;line-height:14px;letter-spacing:-0.67px;">1.7000</div>
<div class="t" style="left:679.5px;top:486px;font-size:12px;line-height:14px;letter-spacing:-0.67px;">1.5000</div>
<div class="t" style="left:674px;top:571px;font-size:12px;line-height:14px;">0</div>
<div class="t" style="left:729px;top:571px;font-size:12px;line-height:14px;">1</div>
<div class="t" style="left:789px;top:571px;font-size:12px;line-height:14px;">2</div>
<div class="t" style="left:849px;top:571px;font-size:12px;line-height:14px;">3</div>
<div class="t" style="left:909px;top:571px;font-size:12px;line-height:14px;">4</div>
<div class="t" style="left:969px;top:571px;font-size:12px;line-height:14px;">5</div>
<div class="t" style="left:1029px;top:571px;font-size:12px;line-height:14px;">6</div>
<div class="t" style="left:1089px;top:571px;font-size:12px;line-height:14px;">7</div>
<div class="t" style="left:1149px;top:571px;font-size:12px;line-height:14px;">8</div>
<div class="t" style="left:1209px;top:571px;font-size:12px;line-height:14px;">9</div>
<svg style="left:860px;top:118px" width="22" height="20" viewBox="860 118 22 20"><path d="M864.500 121.500L877.500 135M877.500 121.500L864.500 135" stroke="#f00" stroke-width="2.200" fill="none"/></svg>
<div class="t" style="left:883px;top:117.5px;font-size:19px;line-height:21px;line-height:22px;letter-spacing:-0.05px;-webkit-text-stroke:0.35px #f00;color:#f00;">BAR CHART</div>
<div class="t" style="left:744px;top:158px;font-size:18.500px;line-height:20px;color:#00f;-webkit-text-stroke:0.35px #00f;">UCL=</div>
<div class="t" style="left:811.5px;top:158px;font-size:18.500px;line-height:20px;color:#00f;-webkit-text-stroke:0.35px #00f;letter-spacing:-0.45px;">2.484</div>
<div class="t" style="left:864px;top:158px;font-size:18.500px;line-height:20px;color:#00f;-webkit-text-stroke:0.35px #00f;">CL=</div>
<div class="t" style="left:919px;top:158px;font-size:18.500px;line-height:20px;color:#00f;-webkit-text-stroke:0.35px #00f;letter-spacing:-0.45px;">1.504</div>
<div class="t" style="left:984px;top:158px;font-size:18.500px;line-height:20px;color:#00f;-webkit-text-stroke:0.35px #00f;">LCL=</div>
<div class="t" style="left:1048px;top:158px;font-size:18.500px;line-height:20px;color:#00f;-webkit-text-stroke:0.35px #00f;letter-spacing:-0.45px;">0.524</div>
<!-- tool palette -->
<div style="left:1305px;top:102px;width:2px;height:487px;background:#f0f0f0;"></div>
<div style="left:1306px;top:102px;width:2px;height:452px;background:#808080;"></div>
<div style="left:1308px;top:552px;width:119px;height:2px;background:#808080;"></div>
<div style="left:1308px;top:102px;width:120px;height:1px;background:#a0a0a0;"></div>
<div class="btn" style="left:1310px;top:103px;width:38px;height:39px;"></div>
<svg style="left:1310px;top:103px" width="38" height="39" viewBox="0 0 38 39"><path d="M6 16.500H28M16.500 7V27" stroke="#000" stroke-width="1.300"/><rect x="11.500" y="11.500" width="10" height="10" fill="none" stroke="#000" stroke-width="1.300"/><g transform="translate(0,0)"><circle cx="20" cy="33" r="2"/><circle cx="26" cy="33" r="2"/><circle cx="32" cy="33" r="2"/></g></svg>
<div class="btn" style="left:1349px;top:103px;width:38px;height:39px;"></div>
<svg style="left:1349px;top:103px" width="38" height="39" viewBox="0 0 38 39"><path d="M4 27L28 3" stroke="#1414ff" stroke-width="1.200"/><g fill="none" stroke="#f00" stroke-width="1" transform="rotate(-45 16 15)"><rect x="0" y="12.500" width="9" height="5"/><rect x="11.500" y="12.500" width="9" height="5"/><rect x="23" y="12.500" width="9" height="5"/></g><path d="M19 19l5 5M19 19v4M19 19h4" stroke="#000" stroke-width="1" fill="none"/><g transform="translate(-1,0)"><circle cx="20" cy="33" r="2"/><circle cx="26" cy="33" r="2"/><circle cx="32" cy="33" r="2"/></g></svg>
<div class="btn" style="left:1388px;top:103px;width:38px;height:39px;"></div>
<svg style="left:1388px;top:103px" width="38" height="39" viewBox="0 0 38 39"><g fill="#c0c0c0" stroke="#f00" stroke-width="1.200"><path d="M9.500 11A13 13 0 0 1 26.500 11L23.500 15A8 8 0 0 0 12.500 15Z"/><path d="M5 18.500A13 13 0 0 0 14 31.500L14.500 26.500A8 8 0 0 1 10.500 18.500Z"/><path d="M31 18.500A13 13 0 0 1 25 30L22.500 25.500A8 8 0 0 0 25.500 18.500Z"/></g><circle cx="18" cy="19.500" r="10.500" fill="none" stroke="#1414ff" stroke-width="1.200"/><g transform="translate(2,1)"><circle cx="20" cy="33" r="2"/><circle cx="26" cy="33" r="2"/><circle cx="32" cy="33" r="2"/></g></svg>
<div class="btn" style="left:1310px;top:145px;width:38px;height:39px;"></div>
<svg style="left:1310px;top:145px" width="38" height="39" viewBox="0 0 38 39"><path d="M9.500 3A14 14 0 0 1 9.500 31L9.500 25A8 8 0 0 0 9.500 9Z" fill="#c0c0c0" stroke="#f00" stroke-width="1.200"/><path d="M9.500 6A11 11 0 0 1 9.500 28" fill="none" stroke="#1414ff" stroke-width="1.200"/><path d="M9.500 2.500V9.500M9.500 24.500V31.500" stroke="#1414ff" stroke-width="1.400"/><g transform="translate(0,0)"><circle cx="20" cy="33" r="2"/><circle cx="26" cy="33" r="2"/><circle cx="32" cy="33" r="2"/></g></svg>
<div class="btn" style="left:1349px;top:145px;width:38px;height:39px;"></div>
<svg style="left:1349px;top:145px" width="38" height="39" viewBox="0 0 38 39"><path d="M5 24.500H30M5.500 24.500L26 4.500" stroke="#000" stroke-width="1.300" fill="none"/><path d="M15.200 15.500C18 17.500 19 20 19 24.500" fill="none" stroke="#1414ff" stroke-width="1.200"/><g fill="none" stroke="#1414ff" stroke-width="1.200"><rect x="21.500" y="14" width="4" height="6.500" rx="1"/><path d="M21.500 14.500L25.500 20"/></g><g transform="translate(2,0)"><circle cx="20" cy="33" r="2"/><circle cx="26" cy="33" r="2"/><circle cx="32" cy="33" r="2"/></g></svg>
<div class="btn" style="left:1388px;top:145px;width:38px;height:39px;"></div>
<svg style="left:1388px;top:145px" width="38" height="39" viewBox="0 0 38 39"><circle cx="14.800" cy="18.200" r="12" fill="none" stroke="#000" stroke-width="1"/><circle cx="14.800" cy="18.200" r="9.300" fill="none" stroke="#000" stroke-width="1"/><circle cx="14.800" cy="18.200" r="10.700" fill="none" stroke="#16a53a" stroke-width="1.300"/><path d="M14.800 18.200L25.500 7.500H34" stroke="#16a53a" stroke-width="1.100" fill="none"/><path d="M27 3.500H33M30 3.500V7.500" stroke="#000" stroke-width="1.100" fill="none"/><circle cx="14.800" cy="18.200" r="2" fill="#f00"/><g transform="translate(1,0)"><circle cx="20" cy="33" r="2"/><circle cx="26" cy="33" r="2"/><circle cx="32" cy="33" r="2"/></g></svg>
<div class="btn" style="left:1310px;top:187px;width:38px;height:40px;"></div>
<svg style="left:1310px;top:187px" width="38" height="39" viewBox="0 0 38 39"><path d="M18.700 9.600L27.800 20L18.700 28.300L8.700 19.200Z" fill="none" stroke="#000" stroke-width="1"/><g fill="none" stroke="#1414ff" stroke-width="1.200"><ellipse cx="18.700" cy="9.600" rx="4" ry="3.300"/><ellipse cx="18.700" cy="28.300" rx="4" ry="3.300"/><ellipse cx="8.200" cy="19.200" rx="3.300" ry="4"/><ellipse cx="27.400" cy="20" rx="4.200" ry="4.800"/></g><path d="M16 9.600H21.500M16 28.300H21.500M8.200 16.500V22M26.500 17V24" stroke="#000" stroke-width="1"/><g transform="translate(2,2.5)"><circle cx="20" cy="33" r="2"/><circle cx="26" cy="33" r="2"/><circle cx="32" cy="33" r="2"/></g></svg>
<div class="btn" style="left:1349px;top:187px;width:38px;height:40px;"></div>
<svg style="left:1349px;top:187px" width="38" height="39" viewBox="0 0 38 39"><path d="M5.600 26.500V7M5.600 26.500H31" stroke="#000" stroke-width="1.300" fill="none"/><path d="M5.600 26.500L14.700 16.600" stroke="#000" stroke-width="1" stroke-dasharray="2 1.500"/><path d="M14.700 16.600V8.500M14.700 16.600H23" stroke="#000" stroke-width="1.200"/><path d="M5.600 2.500L2 8H9.200ZM34 26.500L29 23V30ZM14.700 5L12 9H17.400ZM26.500 16.600L22.500 14V19.200Z" fill="#16a53a"/><rect x="3.600" y="24.500" width="4" height="4" fill="#f00"/><circle cx="14.700" cy="16.600" r="2" fill="#f00"/><g transform="translate(1,2)"><circle cx="20" cy="33" r="2"/><circle cx="26" cy="33" r="2"/><circle cx="32" cy="33" r="2"/></g></svg>
<div class="btn" style="left:1388px;top:187px;width:38px;height:40px;"></div>
<svg style="left:1388px;top:187px" width="38" height="39" viewBox="0 0 38 39"><path d="M12.500 11.700H34.400L28 26.900H5.700Z" fill="#9090f8" stroke="#111" stroke-width="2"/><g transform="translate(2,2)"><circle cx="20" cy="33" r="2"/><circle cx="26" cy="33" r="2"/><circle cx="32" cy="33" r="2"/></g></svg>
<div style="left:1310px;top:229px;width:46px;height:21px;border-top:1px solid #fff;border-left:1px solid #fff;border-right:1px solid #696969;box-shadow:inset -1px 0 0 #a0a0a0;"></div>
<div class="t" style="left:1318px;top:232px;font-size:12px;line-height:14px;">标注</div>
<div style="left:1356px;top:249px;width:71px;height:1px;background:#fff;"></div>
<div class="btn" style="left:1314px;top:252px;width:32px;height:32px;"></div>
<svg style="left:1314px;top:252px" width="32" height="32" viewBox="0 0 32 32"><path d="M5.500 7V27M27.500 7V27" stroke="#000" stroke-width="1.200"/><path d="M8 17.500H25" stroke="#1414ff" stroke-width="1.300"/><path d="M6 17.500L11 14.500V20.500ZM27 17.500L22 14.500V20.500Z" fill="#1414ff"/></svg>
<div class="btn" style="left:1352px;top:252px;width:32px;height:32px;"></div>
<svg style="left:1352px;top:252px" width="32" height="32" viewBox="0 0 32 32"><path d="M7 5.500H27M7 26.500H27" stroke="#000" stroke-width="1.200"/><path d="M17.500 8V24" stroke="#1414ff" stroke-width="1.300"/><path d="M17.500 6L14.500 11H20.500ZM17.500 26L14.500 21H20.500Z" fill="#1414ff"/></svg>
<div style="left:1390px;top:252px;width:32px;height:32px;border:1px solid;border-color:#696969 #fff #fff #696969;background:#f8f8f8;box-shadow:inset 1px 1px 0 #a0a0a0;"></div>
<svg style="left:1390px;top:252px" width="32" height="32" viewBox="0 0 32 32"><path d="M18 3L31 16M4 19L17 32" stroke="#000" stroke-width="1.200"/><path d="M12 23L23 12" stroke="#1414ff" stroke-width="1.300"/><path d="M10.500 24.500L12 18.500L16.500 23ZM24.500 10.500L18.500 12L23 16.500Z" fill="#1414ff"/></svg>
<div class="btn" style="left:1314px;top:288px;width:32px;height:32px;"></div>
<svg style="left:1314px;top:288px" width="32" height="32" viewBox="0 0 32 32"><path d="M3 26H26" stroke="#000" stroke-width="2"/><path d="M9 6.500H23" stroke="#000" stroke-width="1.200"/><circle cx="9" cy="6.500" r="2.600" fill="#000"/><path d="M9.500 9V25" stroke="#000" stroke-width="1" stroke-dasharray="1 1"/><path d="M19.500 9V23" stroke="#1414ff" stroke-width="1.300"/><path d="M19.500 7L16.500 12H22.500ZM19.500 25L16.500 20H22.500Z" fill="#1414ff"/></svg>
<div class="btn" style="left:1352px;top:288px;width:32px;height:32px;"></div>
<svg style="left:1352px;top:288px" width="32" height="32" viewBox="0 0 32 32"><path d="M3 23.500H28M4 23L24 3" stroke="#000" stroke-width="1.200" fill="none"/><path d="M12.500 15C15.500 17 16.500 19 16.500 23" fill="none" stroke="#1414ff" stroke-width="1.200"/><g fill="none" stroke="#1414ff" stroke-width="1.200"><rect x="19.500" y="13.500" width="4" height="6" rx="1"/><path d="M19.500 14L23.500 19"/></g></svg>
<div class="btn" style="left:1390px;top:288px;width:32px;height:32px;"></div>
<svg style="left:1390px;top:288px" width="32" height="32" viewBox="0 0 32 32"><text x="20.500" y="17.500" text-anchor="middle" font-family="Liberation Serif,serif" font-weight="bold" font-size="14" letter-spacing="1.500" fill="#1414ff">xy</text><path d="M31 21.500H11L4 28.500" fill="none" stroke="#1414ff" stroke-width="1.300"/><path d="M2 30.500L4 24.500L8.500 29Z" fill="#1414ff"/></svg>
<div class="btn" style="left:1314px;top:324px;width:32px;height:32px;"></div>
<svg style="left:1314px;top:324px" width="32" height="32" viewBox="0 0 32 32"><circle cx="15.500" cy="15.500" r="11.500" fill="none" stroke="#000" stroke-width="1.100"/><path d="M17 14.500L11 20.500" stroke="#1414ff" stroke-width="1.300"/><path d="M8.500 23L10 17L14.500 21.500Z" fill="#1414ff"/><rect x="16" y="13.500" width="2" height="2" fill="#000"/></svg>
<div class="btn" style="left:1352px;top:324px;width:32px;height:32px;"></div>
<svg style="left:1352px;top:324px" width="32" height="32" viewBox="0 0 32 32"><circle cx="15.500" cy="15.500" r="11" fill="none" stroke="#000" stroke-width="1.100"/><path d="M7 15.500H24" stroke="#1414ff" stroke-width="1.300"/><path d="M5 15.500L10 12.500V18.500ZM26 15.500L21 12.500V18.500Z" fill="#1414ff"/><path d="M15.500 13.500L17.500 15.500L15.500 17.500L13.500 15.500Z" fill="#000"/></svg>
<div class="btn" style="left:1390px;top:324px;width:32px;height:32px;"></div>
<svg style="left:1390px;top:324px" width="32" height="32" viewBox="0 0 32 32"><circle cx="20" cy="19.500" r="8.500" fill="none" stroke="#1414ff" stroke-width="1.100"/><circle cx="20" cy="19.500" r="3.800" fill="none" stroke="#1414ff" stroke-width="1.100"/><path d="M6 12.500H13L17 16.500" fill="none" stroke="#f00" stroke-width="1.200"/><text x="9.500" y="10" text-anchor="middle" font-family="Liberation Mono,monospace" font-weight="bold" font-size="9" fill="#1e9bff">m</text></svg>
<div class="btn" style="left:1314px;top:360px;width:32px;height:32px;"></div>
<svg style="left:1314px;top:360px" width="32" height="32" viewBox="0 0 32 32"><circle cx="23.500" cy="9.500" r="6" fill="none" stroke="#1414ff" stroke-width="1.100"/><circle cx="10.500" cy="23" r="7.200" fill="none" stroke="#1414ff" stroke-width="1.100"/></svg>
<div class="btn" style="left:1352px;top:360px;width:32px;height:32px;"></div>
<svg style="left:1352px;top:360px" width="32" height="32" viewBox="0 0 32 32"><rect x="7" y="15" width="18" height="12" fill="#000030"/><path d="M7.500 4V12M24.500 4V12" stroke="#1414ff" stroke-width="1.200"/><path d="M9 8H23" stroke="#e0143c" stroke-width="1.200"/><path d="M8.500 8L12 5.500V10.500ZM23.500 8L20 5.500V10.500Z" fill="#e0143c"/></svg>
<div class="btn" style="left:1314px;top:396px;width:32px;height:32px;"></div>
<svg style="left:1314px;top:396px" width="32" height="32" viewBox="0 0 32 32"><path d="M4 26L12 18H30L22 26Z" fill="#b8b8f8"/><path d="M4 26.500H21L22.500 25" stroke="#000" stroke-width="1.300" fill="none"/><path d="M4 26L12 18" stroke="#000" stroke-width="1"/><path d="M16.500 6V21" stroke="#1e9bff" stroke-width="1" stroke-dasharray="1 1"/><path d="M16.500 3.500L18.500 5.500L16.500 7.500L14.500 5.500ZM16.500 19L18.500 21L16.500 23L14.500 21Z" fill="#1414ff"/><path d="M20 5.500H27M20 21.500H27" stroke="#ff8c1a" stroke-width="1.300"/><path d="M24 8V19" stroke="#f00" stroke-width="1.300"/><path d="M24 6L21.500 10H26.500ZM24 21L21.500 17H26.500Z" fill="#f00"/></svg>
<div class="btn" style="left:1352px;top:396px;width:32px;height:32px;"></div>
<svg style="left:1352px;top:396px" width="32" height="32" viewBox="0 0 32 32"><path d="M5 17L19 4M5 20.500H27" stroke="#000" stroke-width="1.200" fill="none"/><path d="M12 12L16 18" stroke="#f00" stroke-width="1.200"/><path d="M11 10.500L15 11.500L12 14ZM17 19.500L13 18.500L16 16Z" fill="#f00"/><text x="21.500" y="16" text-anchor="middle" font-family="Liberation Mono,monospace" font-weight="bold" font-size="11" fill="#f00">D</text></svg>
<div class="btn" style="left:1390px;top:396px;width:32px;height:32px;"></div>
<svg style="left:1390px;top:396px" width="32" height="32" viewBox="0 0 32 32"><path d="M12 26L30 10" stroke="#000" stroke-width="1.300"/><path d="M12 26.500L30 10.500" stroke="#1414ff" stroke-width=".8"/><g transform="rotate(-40 13 15)" fill="none" stroke="#f00" stroke-width="1"><rect x="3" y="13" width="20" height="4.500"/><path d="M8 13v4.500M13 13v4.500M18 13v4.500"/></g></svg>
<div class="btn" style="left:1314px;top:432px;width:32px;height:32px;"></div>
<svg style="left:1314px;top:432px" width="32" height="32" viewBox="0 0 32 32"><text x="22" y="13" text-anchor="middle" font-family="Liberation Sans,sans-serif" font-size="12" fill="#e0147a">H</text><path d="M28 15.500H15L7 23.500" fill="none" stroke="#000" stroke-width="1.200"/><path d="M4.500 26L6 20L10.500 24.500Z" fill="#f0f"/><rect x="5" y="23" width="3" height="3" fill="#f0f"/></svg>
<div class="btn" style="left:1352px;top:432px;width:32px;height:32px;"></div>
<svg style="left:1352px;top:432px" width="32" height="32" viewBox="0 0 32 32"><path d="M17.500 16V7M17.500 16H6M17.500 16L11 23M17.500 16L24 23" stroke="#f00" stroke-width="1.300" fill="none"/><path d="M17.500 4L14.500 8.500H20.500ZM3 16L8 13V19ZM9 25.500L10 20.500L14 24ZM26 25.500L25 20.500L21 24Z" fill="#1414ff"/><rect x="16" y="14.500" width="3.500" height="3.500" fill="#000"/></svg>
<div class="btn" style="left:1390px;top:432px;width:32px;height:32px;"></div>
<svg style="left:1390px;top:432px" width="32" height="32" viewBox="0 0 32 32"><path d="M4 8L21 25" stroke="#1414ff" stroke-width="1.200"/><path d="M8 12L14 6M13 17L21 9M17 21L23 15" stroke="#f00" stroke-width="1.200"/><path d="M15.500 4.500L11 6L14 9ZM22.500 7.500L18 9L21 12ZM24.500 13.500L20 15L23 18Z" fill="#f00"/><circle cx="8" cy="12" r="1.300" fill="#000"/><circle cx="13" cy="17" r="1.300" fill="#000"/><circle cx="17" cy="21" r="1.300" fill="#000"/></svg>
<div class="btn" style="left:1314px;top:469px;width:32px;height:32px;"></div>
<svg style="left:1314px;top:469px" width="32" height="32" viewBox="0 0 32 32"><circle cx="13" cy="14" r="7.500" fill="none" stroke="#000" stroke-width="1.100"/><path d="M17 30L29 9" stroke="#000" stroke-width="1.200"/></svg>
<div style="left:1353px;top:470px;width:31px;height:31px;background:#f0f0f0;border-left:3px solid #000;border-top:3px solid #000;"></div>
<svg style="left:1352px;top:469px" width="32" height="32" viewBox="0 0 32 32"><path d="M30.500 5V31M5 30.500H31" stroke="#000" stroke-width="1.500" stroke-dasharray="1.500 1.500"/><g fill="#000"><path d="M8 10l3-3 3 1 3-2 3 2 3-1 2 3-1 3 2 2-2 2 0 3-3 1-2 2-3-1-3 1-3-2-2 0-1-3 1-2-2-3 2-2z"/><rect x="12.5" y="8.9" width="1.0" height="1.0"/><rect x="21.0" y="7.8" width="1.0" height="2.0"/><rect x="10.6" y="7.6" width="2.5" height="1.0"/><rect x="11.1" y="16.5" width="1.0" height="2.0"/><rect x="9.1" y="10.2" width="1.0" height="2.0"/><rect x="17.0" y="6.9" width="1.5" height="1.0"/><rect x="16.5" y="8.5" width="2.5" height="1.0"/><rect x="16.2" y="16.8" width="1.5" height="1.0"/><rect x="16.9" y="18.1" width="2.0" height="1.0"/><rect x="16.3" y="7.2" width="1.0" height="2.0"/><rect x="10.5" y="18.9" width="2.5" height="1.5"/><rect x="14.9" y="23.5" width="2.0" height="1.5"/><rect x="11.2" y="9.4" width="1.5" height="1.0"/><rect x="16.8" y="16.0" width="2.0" height="2.0"/><rect x="14.6" y="17.6" width="1.0" height="1.0"/><rect x="15.7" y="9.1" width="2.0" height="1.0"/><rect x="22.9" y="14.0" width="1.0" height="2.0"/><rect x="16.7" y="22.6" width="2.0" height="1.5"/><rect x="18.8" y="17.3" width="2.5" height="1.0"/><rect x="21.3" y="23.9" width="2.5" height="2.0"/><rect x="18.3" y="7.2" width="2.0" height="2.0"/><rect x="16.8" y="18.9" width="2.5" height="1.5"/><rect x="19.2" y="22.9" width="2.0" height="1.0"/><rect x="23.0" y="12.8" width="1.0" height="1.5"/><rect x="8.0" y="20.6" width="1.5" height="2.0"/><rect x="11.2" y="13.4" width="2.5" height="1.0"/><rect x="9.8" y="13.6" width="2.0" height="1.0"/><rect x="20.9" y="22.4" width="2.0" height="2.0"/><rect x="14.1" y="12.8" width="2.5" height="1.0"/><rect x="9.6" y="9.3" width="1.5" height="2.0"/><rect x="11.0" y="15.2" width="1.5" height="1.5"/><rect x="11.8" y="8.8" width="2.0" height="2.0"/><rect x="16.6" y="24.1" width="1.0" height="1.5"/><rect x="22.3" y="20.8" width="2.5" height="1.5"/><rect x="13.8" y="8.0" width="2.5" height="1.0"/><rect x="10.2" y="24.7" width="2.5" height="1.0"/><rect x="8.9" y="17.4" width="1.0" height="1.0"/><rect x="16.6" y="16.2" width="2.0" height="2.0"/><rect x="7.4" y="22.6" width="2.5" height="1.0"/><rect x="17.8" y="24.2" width="2.0" height="1.5"/><rect x="9.1" y="22.1" width="2.5" height="1.5"/><rect x="15.2" y="7.6" width="1.0" height="2.0"/><rect x="12.8" y="11.0" width="1.5" height="2.0"/><rect x="7.4" y="24.1" width="2.0" height="1.0"/><rect x="18.7" y="23.4" width="2.0" height="2.0"/><rect x="21.7" y="19.2" width="2.0" height="2.0"/><rect x="13.2" y="9.2" width="1.5" height="2.0"/><rect x="16.2" y="15.6" width="1.5" height="2.0"/><rect x="20.8" y="24.7" width="1.5" height="1.0"/><rect x="20.9" y="20.1" width="1.5" height="1.0"/><rect x="15.8" y="12.8" width="1.0" height="1.0"/><rect x="20.4" y="15.0" width="1.5" height="2.0"/><rect x="17.3" y="12.5" width="2.0" height="1.5"/><rect x="8.4" y="7.9" width="2.5" height="1.0"/><rect x="12.7" y="15.2" width="1.0" height="1.5"/><rect x="22.5" y="12.5" width="1.0" height="2.0"/><rect x="9.0" y="13.4" width="1.5" height="1.5"/><rect x="22.1" y="14.2" width="2.0" height="1.0"/><rect x="20.6" y="24.5" width="2.5" height="1.5"/><rect x="13.8" y="24.0" width="1.5" height="1.0"/><rect x="23.9" y="6.5" width="2.5" height="2.0"/><rect x="9.5" y="21.7" width="2.5" height="2.0"/><rect x="22.9" y="9.0" width="1.5" height="1.0"/><rect x="7.2" y="24.4" width="1.0" height="2.0"/><rect x="19.7" y="8.6" width="1.5" height="1.0"/><rect x="7.5" y="10.0" width="1.5" height="2.0"/><rect x="12.5" y="16.3" width="1.5" height="1.0"/><rect x="22.5" y="12.7" width="2.5" height="2.0"/><rect x="16.9" y="23.2" width="2.5" height="2.0"/><rect x="9.2" y="8.9" width="1.0" height="1.5"/></g><g fill="#f0f0f0"><path d="M11 11h4v3h-4zM18 12h4v3h-4zM12 18l4 2 5-2 1 2-6 3-5-3zM15 14h2v3h-2z"/></g><g fill="#000"><rect x="12" y="12" width="2" height="1.500"/><rect x="19" y="13" width="2" height="1.500"/></g></svg>
<div style="left:1391px;top:469px;width:32px;height:32px;border-right:1px dashed #fff;border-bottom:1px dashed #fff;"></div>
<svg style="left:1391px;top:469px" width="32" height="32" viewBox="0 0 32 32"><g fill="#fff" opacity=".8"><rect x="13.9" y="15.9" width="3.0" height="2.5"/><rect x="15.2" y="16.5" width="2.0" height="2.5"/><rect x="18.1" y="21.2" width="1.5" height="2.5"/><rect x="10.3" y="5.1" width="1.5" height="2.5"/><rect x="26.2" y="18.0" width="2.0" height="1.0"/><rect x="23.0" y="4.5" width="1.5" height="1.5"/><rect x="24.1" y="16.8" width="3.0" height="2.0"/><rect x="13.6" y="22.4" width="2.0" height="2.0"/><rect x="15.0" y="18.2" width="3.0" height="2.0"/><rect x="12.8" y="15.7" width="1.5" height="2.0"/><rect x="10.6" y="8.3" width="2.5" height="1.0"/><rect x="4.7" y="20.6" width="3.0" height="1.0"/><rect x="23.3" y="11.9" width="1.5" height="1.0"/><rect x="8.1" y="24.3" width="1.5" height="2.5"/><rect x="12.0" y="19.3" width="3.0" height="1.0"/><rect x="16.6" y="7.6" width="2.5" height="2.0"/><rect x="5.1" y="10.6" width="3.0" height="1.0"/><rect x="6.2" y="19.3" width="1.5" height="1.0"/><rect x="14.2" y="14.2" width="2.0" height="2.5"/><rect x="15.2" y="25.7" width="2.0" height="2.5"/><rect x="18.4" y="5.7" width="3.0" height="1.5"/><rect x="3.0" y="22.9" width="2.5" height="1.0"/><rect x="8.1" y="12.1" width="1.5" height="1.0"/><rect x="26.7" y="7.9" width="2.5" height="1.0"/><rect x="21.5" y="10.6" width="2.5" height="2.5"/><rect x="4.8" y="5.1" width="2.0" height="1.0"/><rect x="17.4" y="11.5" width="3.0" height="1.5"/><rect x="26.0" y="14.1" width="2.0" height="2.5"/><rect x="7.4" y="6.5" width="2.0" height="1.5"/><rect x="20.4" y="6.6" width="2.0" height="2.5"/><rect x="24.2" y="16.9" width="3.0" height="1.0"/><rect x="5.5" y="3.9" width="2.5" height="1.5"/><rect x="20.8" y="12.0" width="3.0" height="2.5"/><rect x="10.0" y="7.0" width="1.5" height="1.5"/><rect x="8.5" y="15.9" width="1.5" height="2.0"/><rect x="8.1" y="24.0" width="1.5" height="1.0"/><rect x="9.5" y="13.3" width="1.5" height="1.0"/><rect x="7.2" y="11.5" width="2.0" height="1.0"/><rect x="11.7" y="23.5" width="2.5" height="1.5"/><rect x="17.2" y="24.2" width="3.0" height="2.0"/><rect x="19.8" y="25.1" width="1.5" height="1.0"/><rect x="14.6" y="19.8" width="2.5" height="1.5"/><rect x="27.0" y="4.7" width="2.5" height="1.0"/><rect x="24.6" y="20.0" width="2.0" height="2.0"/><rect x="11.4" y="18.8" width="1.5" height="2.5"/><rect x="25.7" y="3.7" width="3.0" height="1.0"/><rect x="18.0" y="11.8" width="1.5" height="1.0"/><rect x="4.9" y="17.7" width="2.5" height="2.5"/><rect x="20.5" y="11.9" width="3.0" height="2.5"/><rect x="14.1" y="15.4" width="1.5" height="2.0"/><rect x="17.4" y="14.1" width="2.0" height="1.0"/><rect x="14.9" y="17.1" width="3.0" height="2.0"/><rect x="24.5" y="11.5" width="2.0" height="1.5"/><rect x="15.4" y="20.3" width="2.5" height="2.5"/><rect x="15.0" y="8.6" width="3.0" height="2.0"/><rect x="7.8" y="12.9" width="2.0" height="1.5"/><rect x="12.2" y="16.4" width="2.5" height="1.5"/><rect x="6.3" y="14.4" width="1.5" height="1.0"/><rect x="25.8" y="9.4" width="2.0" height="1.0"/><rect x="13.8" y="9.3" width="2.0" height="2.5"/><rect x="12.2" y="15.0" width="2.5" height="2.5"/><rect x="10.7" y="22.1" width="2.5" height="1.0"/><rect x="19.3" y="9.5" width="2.5" height="2.0"/><rect x="18.6" y="16.0" width="2.0" height="2.5"/><rect x="13.9" y="3.6" width="2.5" height="1.5"/><rect x="21.7" y="21.3" width="1.5" height="2.5"/><rect x="5.6" y="15.3" width="2.5" height="1.0"/><rect x="19.4" y="7.6" width="3.0" height="2.0"/><rect x="7.3" y="3.2" width="3.0" height="1.0"/><rect x="7.3" y="9.3" width="2.5" height="1.5"/><rect x="12.4" y="21.2" width="2.0" height="1.0"/><rect x="12.9" y="23.5" width="3.0" height="1.5"/><rect x="13.8" y="7.5" width="1.5" height="2.5"/><rect x="16.2" y="18.0" width="2.5" height="2.5"/><rect x="10.8" y="25.6" width="1.5" height="1.0"/><rect x="8.1" y="23.7" width="1.5" height="2.0"/><rect x="15.9" y="21.2" width="2.5" height="2.0"/><rect x="24.8" y="22.7" width="2.5" height="1.0"/><rect x="3.9" y="10.9" width="3.0" height="2.0"/><rect x="14.7" y="3.7" width="1.5" height="2.5"/><rect x="22.2" y="7.0" width="2.5" height="1.5"/><rect x="14.3" y="26.0" width="3.0" height="2.5"/><rect x="16.9" y="18.8" width="2.0" height="2.5"/><rect x="15.6" y="9.7" width="2.0" height="2.0"/><rect x="10.5" y="11.8" width="2.0" height="2.0"/><rect x="23.4" y="25.3" width="2.5" height="2.5"/><rect x="7.8" y="15.3" width="1.5" height="2.5"/><rect x="3.7" y="25.3" width="3.0" height="1.0"/><rect x="14.8" y="18.9" width="1.5" height="2.5"/><rect x="12.9" y="25.0" width="3.0" height="2.0"/><rect x="8.9" y="14.3" width="2.5" height="2.5"/><rect x="24.6" y="24.5" width="3.0" height="2.0"/><rect x="5.6" y="12.6" width="1.5" height="2.0"/><rect x="6.1" y="20.9" width="1.5" height="1.0"/><rect x="7.7" y="8.2" width="2.5" height="2.0"/><rect x="20.4" y="8.6" width="3.0" height="1.0"/><rect x="15.0" y="16.4" width="2.5" height="1.5"/><rect x="19.8" y="23.2" width="1.5" height="2.5"/><rect x="18.2" y="22.0" width="2.0" height="1.5"/><rect x="23.7" y="15.3" width="2.0" height="1.5"/><rect x="23.4" y="17.1" width="2.0" height="1.5"/><rect x="25.0" y="17.4" width="2.5" height="1.5"/><rect x="10.6" y="10.2" width="2.0" height="1.5"/><rect x="21.7" y="7.5" width="1.5" height="1.5"/><rect x="24.3" y="6.0" width="1.5" height="2.0"/><rect x="12.3" y="13.0" width="3.0" height="1.5"/><rect x="7.8" y="17.4" width="1.5" height="1.0"/><rect x="7.8" y="18.7" width="2.5" height="1.0"/><rect x="19.9" y="17.6" width="2.5" height="1.5"/><rect x="22.3" y="14.1" width="1.5" height="1.0"/></g></svg>
<div class="btn" style="left:1315px;top:510px;width:32px;height:32px;"></div>
<svg style="left:1315px;top:510px" width="32" height="32" viewBox="0 0 32 32"><path d="M3.500 12V4.500H28.500V12H25V8H21.500V12H18V8H14.500V12H11V8H7.500V12Z" fill="#fff" stroke="#000" stroke-width="1.300"/><path d="M5.500 14V28M13.500 14V17M20.500 15V23M27.500 16V28" stroke="#f00" stroke-width="1.200"/><path d="M6 16.500H11M6 21.500H18M6 26.500H25" stroke="#1414ff" stroke-width="1.200"/><path d="M13.500 16.500L10 14.500V18.500ZM20.500 21.500L17 19.500V23.500ZM27.500 26.500L24 24.500V28.500Z" fill="#1414ff"/></svg>
<div class="btn" style="left:1353px;top:510px;width:32px;height:32px;"></div>
<svg style="left:1353px;top:510px" width="32" height="32" viewBox="0 0 32 32"><path d="M6.500 16V5.500H26.500V16M10.500 16V8.500H22.500V16" fill="none" stroke="#000" stroke-width="1.200"/><path d="M8.500 17V25M24.500 17V25" stroke="#000" stroke-width="1.200"/><path d="M10 21.500H23" stroke="#1414ff" stroke-width="1.300"/><path d="M9 21.500L14 18.500V24.500ZM24 21.500L19 18.500V24.500Z" fill="#1414ff"/></svg>
<div class="btn" style="left:1391px;top:510px;width:32px;height:32px;"></div>
<svg style="left:1391px;top:510px" width="32" height="32" viewBox="0 0 32 32"><text x="15.500" y="26" text-anchor="middle" font-family="Liberation Serif,serif" font-size="29" fill="#d9300a">T</text></svg>
<!-- CAD view -->
<div style="left:5px;top:590px;width:653px;height:278px;background:#000;"></div>
<svg style="left:5px;top:590px" width="653" height="278" viewBox="5 590 653 278"><path d="M27 605.500H657" stroke="#f00" stroke-width="1" stroke-dasharray="3 3" shape-rendering="crispEdges"/><path d="M342 590V729H658" fill="none" stroke="#f00" stroke-width="2" shape-rendering="crispEdges"/></svg>
<div class="btn" style="left:5px;top:590px;width:22px;height:23px;"></div>
<svg style="left:5px;top:590px" width="22" height="24" viewBox="0 0 22 24"><circle cx="10" cy="10.500" r="6.200" fill="none" stroke="#000" stroke-width="1.200"/><path d="M14.500 15.500L19 20" stroke="#1414ff" stroke-width="2.800"/><rect x="7" y="7.500" width="6" height="6" fill="none" stroke="#f00" stroke-width="1.300"/></svg>
<div class="btn" style="left:5px;top:616px;width:22px;height:23px;"></div>
<svg style="left:5px;top:616px" width="22" height="24" viewBox="0 0 22 24"><circle cx="10" cy="10.500" r="6.200" fill="none" stroke="#000" stroke-width="1.200"/><path d="M14.500 15.500L19 20" stroke="#1414ff" stroke-width="2.800"/><path d="M6 10.500H14M10 6.500V14.500" stroke="#f00" stroke-width="1.500"/></svg>
<div class="btn" style="left:5px;top:641px;width:22px;height:23px;"></div>
<svg style="left:5px;top:641px" width="22" height="24" viewBox="0 0 22 24"><circle cx="10" cy="10.500" r="6.200" fill="none" stroke="#000" stroke-width="1.200"/><path d="M14.500 15.500L19 20" stroke="#1414ff" stroke-width="2.800"/><path d="M6 10H14" stroke="#f00" stroke-width="2.200"/></svg>
<div class="btn" style="left:5px;top:666px;width:22px;height:23px;"></div>
<svg style="left:5px;top:666px" width="22" height="24" viewBox="0 0 22 24"><circle cx="10" cy="10.500" r="6.200" fill="none" stroke="#000" stroke-width="1.200"/><path d="M14.500 15.500L19 20" stroke="#1414ff" stroke-width="2.800"/><path d="M5.500 10.500H14.500M10 6V15" stroke="#f00" stroke-width="1.200"/><path d="M10 5L8 7.500H12ZM10 16L8 13.500H12ZM4.500 10.500L7 8.500V12.500ZM15.500 10.500L13 8.500V12.500Z" fill="#f00"/></svg>
<div class="btn" style="left:5px;top:691px;width:22px;height:23px;"></div>
<svg style="left:5px;top:691px" width="22" height="24" viewBox="0 0 22 24"><path d="M4 6.500C5 4 8 3.500 10 5.500L16 11.500L13.500 17L8.500 15C5.500 13.500 3 10 4 6.500Z" fill="#d89a9a"/><path d="M5.500 6l6 6M7.500 5l6 6M4.500 8.500l5.500 5" stroke="#b87474" stroke-width=".8"/><path d="M13 13.500l3-2.500 1.500 1.500-3 3z" fill="#f2f4f8"/><path d="M14.500 16l3-3.500 3 3V19.500H15z" fill="#1c4f8a"/><path d="M16.500 3v7M13 6.500h7" stroke="#1c4f8a" stroke-width="1.300"/><path d="M16.500 2l-1.800 2.200h3.600zM16.500 11l-1.800-2.200h3.600zM12 6.500l2.200-1.800v3.600zM21 6.500l-2.200-1.800v3.600z" fill="#1c4f8a"/></svg>
<div class="btn" style="left:5px;top:716px;width:22px;height:23px;"></div>
<svg style="left:5px;top:716px" width="22" height="24" viewBox="0 0 22 24"><rect x="5" y="7" width="14" height="11" fill="#ece6d4"/><rect x="5" y="7" width="14" height="2" fill="#1e6ad8"/><rect x="5" y="16.500" width="14" height="1.500" fill="#1e6ad8"/><path d="M5.500 8V17M18.500 8V17" stroke="#4a8ae0" stroke-width="1"/><circle cx="13" cy="13.500" r="4.300" fill="#dff0f8" stroke="#a9b8c4" stroke-width="1.300"/><path d="M10 17L5.500 21.500" stroke="#e89a20" stroke-width="2.400"/><path d="M9.500 16.500L6 20" stroke="#f8d070" stroke-width=".8"/></svg>
<div class="btn" style="left:5px;top:766px;width:22px;height:23px;"></div>
<svg style="left:5px;top:766px" width="22" height="24" viewBox="0 0 22 24"><rect x="5" y="5" width="13" height="14" rx="1" fill="#4a79c9"/><rect x="7" y="5" width="9" height="6" fill="#dfe8f4"/><rect x="8" y="7" width="7" height="1" fill="#9db4d6"/><rect x="8" y="14" width="7" height="5" fill="#c9d2de"/><rect x="9" y="15" width="2" height="4" fill="#2c4f9a"/></svg>
<div class="btn" style="left:5px;top:792px;width:22px;height:24px;"></div>
<svg style="left:5px;top:792px" width="22" height="24" viewBox="0 0 22 24"><path d="M3.500 20V4" stroke="#000" stroke-width="1.200"/><path d="M3.500 1.500L1.500 5H5.500Z" fill="#000"/><rect x="1.500" y="18" width="4" height="4" fill="#1414ff"/><path d="M5.500 20.500H21" stroke="#000" stroke-width="1"/><path d="M8 10.500H18M13 5.500V15.500" stroke="#f00" stroke-width="1.200"/><path d="M13 3.500L11 6.500H15ZM13 17.500L11 14.500H15ZM6 10.500L9 8.500V12.500ZM20 10.500L17 8.500V12.500Z" fill="#f00"/></svg>
<div class="btn" style="left:5px;top:823px;width:22px;height:23px;"></div>
<svg style="left:5px;top:823px" width="22" height="24" viewBox="0 0 22 24"><path d="M8 8.500H19.500L14 13.500H2.500Z" fill="#8f8ff0" stroke="#222" stroke-width=".8"/></svg>
<!-- annotation list -->
<div style="left:661px;top:590px;width:116px;height:148px;background:#f0f0f0;overflow:hidden;"></div>
<div style="left:662px;top:592px;width:13px;height:13px;background:#fff;border:2px solid #808080;"></div>
<div style="left:677px;top:591px;width:16px;height:17px;background:#ececec;"></div>
<svg style="left:676px;top:590px" width="18" height="17" viewBox="0 0 18 17"><path d="M0 6.500L9.500 16M7.300 0.900L16.500 9.500" stroke="#1414ff" stroke-width="1.100"/><path d="M5.200 14.300L13 5.900" stroke="#f00" stroke-width="1.200"/><path d="M9.800 6.200L13.200 5.700L12.700 9.200M5.700 11L5 14.500L8.500 14" fill="none" stroke="#f00" stroke-width="1.200"/></svg>
<div class="t" style="left:693.5px;top:591px;font-size:12px;line-height:14px;">对齐标注</div>
<div class="t" style="left:742px;top:591px;font-size:12px;line-height:14px;letter-spacing:0.2px;">[1]</div>
<div style="left:662px;top:609px;width:13px;height:13px;background:#fff;border:2px solid #808080;"></div>
<div style="left:677px;top:608px;width:16px;height:17px;background:#ececec;"></div>
<svg style="left:676px;top:607px" width="18" height="17" viewBox="0 0 18 17"><path d="M0 6.500L9.500 16M7.300 0.900L16.500 9.500" stroke="#1414ff" stroke-width="1.100"/><path d="M5.200 14.300L13 5.900" stroke="#f00" stroke-width="1.200"/><path d="M9.800 6.200L13.200 5.700L12.700 9.200M5.700 11L5 14.500L8.500 14" fill="none" stroke="#f00" stroke-width="1.200"/></svg>
<div class="t" style="left:693.5px;top:608px;font-size:12px;line-height:14px;">对齐标注</div>
<div class="t" style="left:742px;top:608px;font-size:12px;line-height:14px;letter-spacing:0.2px;">[2]</div>
<div style="left:662px;top:626px;width:13px;height:13px;background:#fff;border:2px solid #808080;"></div>
<div style="left:677px;top:625px;width:16px;height:17px;background:#ececec;"></div>
<svg style="left:676px;top:624px" width="18" height="17" viewBox="0 0 18 17"><path d="M0 6.500L9.500 16M7.300 0.900L16.500 9.500" stroke="#1414ff" stroke-width="1.100"/><path d="M5.200 14.300L13 5.900" stroke="#f00" stroke-width="1.200"/><path d="M9.800 6.200L13.200 5.700L12.700 9.200M5.700 11L5 14.500L8.500 14" fill="none" stroke="#f00" stroke-width="1.200"/></svg>
<div class="t" style="left:693.5px;top:625px;font-size:12px;line-height:14px;">对齐标注</div>
<div class="t" style="left:742px;top:625px;font-size:12px;line-height:14px;letter-spacing:0.2px;">[3]</div>
<div style="left:662px;top:643px;width:13px;height:13px;background:#fff;border:2px solid #808080;"></div>
<div style="left:677px;top:642px;width:16px;height:17px;background:#ececec;"></div>
<svg style="left:676px;top:641px" width="18" height="17" viewBox="0 0 18 17"><path d="M0 6.500L9.500 16M7.300 0.900L16.500 9.500" stroke="#1414ff" stroke-width="1.100"/><path d="M5.200 14.300L13 5.900" stroke="#f00" stroke-width="1.200"/><path d="M9.800 6.200L13.200 5.700L12.700 9.200M5.700 11L5 14.500L8.500 14" fill="none" stroke="#f00" stroke-width="1.200"/></svg>
<div class="t" style="left:693.5px;top:642px;font-size:12px;line-height:14px;">对齐标注</div>
<div class="t" style="left:742px;top:642px;font-size:12px;line-height:14px;letter-spacing:0.2px;">[4]</div>
<div style="left:662px;top:660px;width:13px;height:13px;background:#fff;border:2px solid #808080;"></div>
<div style="left:677px;top:659px;width:16px;height:17px;background:#ececec;"></div>
<svg style="left:676px;top:658px" width="18" height="17" viewBox="0 0 18 17"><path d="M0 6.500L9.500 16M7.300 0.900L16.500 9.500" stroke="#1414ff" stroke-width="1.100"/><path d="M5.200 14.300L13 5.900" stroke="#f00" stroke-width="1.200"/><path d="M9.800 6.200L13.200 5.700L12.700 9.200M5.700 11L5 14.500L8.500 14" fill="none" stroke="#f00" stroke-width="1.200"/></svg>
<div class="t" style="left:693.5px;top:659px;font-size:12px;line-height:14px;">对齐标注</div>
<div class="t" style="left:742px;top:659px;font-size:12px;line-height:14px;letter-spacing:0.2px;">[5]</div>
<div style="left:662px;top:677px;width:13px;height:13px;background:#fff;border:2px solid #808080;"></div>
<div style="left:677px;top:676px;width:16px;height:17px;background:#ececec;"></div>
<svg style="left:676px;top:675px" width="18" height="17" viewBox="0 0 18 17"><path d="M0 6.500L9.500 16M7.300 0.900L16.500 9.500" stroke="#1414ff" stroke-width="1.100"/><path d="M5.200 14.300L13 5.900" stroke="#f00" stroke-width="1.200"/><path d="M9.800 6.200L13.200 5.700L12.700 9.200M5.700 11L5 14.500L8.500 14" fill="none" stroke="#f00" stroke-width="1.200"/></svg>
<div class="t" style="left:693.5px;top:676px;font-size:12px;line-height:14px;">对齐标注</div>
<div class="t" style="left:742px;top:676px;font-size:12px;line-height:14px;letter-spacing:0.2px;">[6]</div>
<div style="left:662px;top:694px;width:13px;height:13px;background:#fff;border:2px solid #808080;"></div>
<div style="left:677px;top:693px;width:16px;height:17px;background:#ececec;"></div>
<svg style="left:676px;top:692px" width="18" height="17" viewBox="0 0 18 17"><path d="M0 6.500L9.500 16M7.300 0.900L16.500 9.500" stroke="#1414ff" stroke-width="1.100"/><path d="M5.200 14.300L13 5.900" stroke="#f00" stroke-width="1.200"/><path d="M9.800 6.200L13.200 5.700L12.700 9.200M5.700 11L5 14.500L8.500 14" fill="none" stroke="#f00" stroke-width="1.200"/></svg>
<div class="t" style="left:693.5px;top:693px;font-size:12px;line-height:14px;">对齐标注</div>
<div class="t" style="left:742px;top:693px;font-size:12px;line-height:14px;letter-spacing:0.2px;">[7]</div>
<div style="left:662px;top:711px;width:13px;height:13px;background:#fff;border:2px solid #808080;"></div>
<div style="left:677px;top:710px;width:16px;height:17px;background:#ececec;"></div>
<svg style="left:676px;top:709px" width="18" height="17" viewBox="0 0 18 17"><path d="M0 6.500L9.500 16M7.300 0.900L16.500 9.500" stroke="#1414ff" stroke-width="1.100"/><path d="M5.200 14.300L13 5.900" stroke="#f00" stroke-width="1.200"/><path d="M9.800 6.200L13.200 5.700L12.700 9.200M5.700 11L5 14.500L8.500 14" fill="none" stroke="#f00" stroke-width="1.200"/></svg>
<div class="t" style="left:693.5px;top:710px;font-size:12px;line-height:14px;">对齐标注</div>
<div class="t" style="left:742px;top:710px;font-size:12px;line-height:14px;letter-spacing:0.2px;">[8]</div>
<div style="left:662px;top:728px;width:13px;height:13px;background:#fff;border:2px solid #808080;"></div>
<div style="left:677px;top:727px;width:16px;height:17px;background:#ececec;"></div>
<svg style="left:676px;top:726px" width="18" height="17" viewBox="0 0 18 17"><path d="M0 6.500L9.500 16M7.300 0.900L16.500 9.500" stroke="#1414ff" stroke-width="1.100"/><path d="M5.200 14.300L13 5.900" stroke="#f00" stroke-width="1.200"/><path d="M9.800 6.200L13.200 5.700L12.700 9.200M5.700 11L5 14.500L8.500 14" fill="none" stroke="#f00" stroke-width="1.200"/></svg>
<div class="t" style="left:693.5px;top:727px;font-size:12px;line-height:14px;">对齐标注</div>
<div class="t" style="left:742px;top:727px;font-size:12px;line-height:14px;letter-spacing:0.2px;">[9]</div>
<div style="left:661px;top:738px;width:290px;height:3px;background:#f0f0f0;"></div>
<div style="left:777px;top:590px;width:16px;height:148px;background:linear-gradient(90deg,#e6e6e6,#f4f4f4 40%,#f0f0f0);"></div>
<svg style="left:780px;top:597px" width="9" height="9"><path d="M0 4.500L4 0.500L8 4.500Z" fill="#404040"/></svg>
<svg style="left:780px;top:727px" width="9" height="9"><path d="M0 0.500H8L4 4.500Z" fill="#404040"/></svg>
<div style="left:778px;top:609px;width:14px;height:15px;border:1px solid #8e8e8e;border-radius:2px;background:linear-gradient(90deg,#f6f6f6 0,#e4e4e4 45%,#d2d2d2 55%,#dcdcdc 100%);box-shadow:inset 0 0 0 1px #fff;"></div>
<div style="left:795px;top:590px;width:152px;height:149px;background:#fff;border:1px solid;border-color:#a0a0a0 #e3e3e3 #e3e3e3 #a0a0a0;"></div>
<!-- result table -->
<div style="left:948px;top:590px;width:457px;height:149px;background:#fff;"></div>
<div style="left:948px;top:590px;width:457px;height:18px;background:#f0f0f0;"></div>
<div style="left:948px;top:590px;width:77px;height:149px;background:#f0f0f0;"></div>
<svg style="left:948px;top:590px;overflow:hidden" width="458" height="149" viewBox="948 590 458 149" shape-rendering="crispEdges"><path d="M948 607.500H1405" stroke="#a0a0a0"/><path d="M948 608.500H1405" stroke="#000"/><path d="M1023.5 590V608" stroke="#a0a0a0"/><path d="M1024.5 590V609" stroke="#000"/><path d="M1025.5 591V607" stroke="#fff"/><path d="M1099.5 590V608" stroke="#a0a0a0"/><path d="M1100.5 590V609" stroke="#000"/><path d="M1101.5 591V607" stroke="#fff"/><path d="M1175.5 590V608" stroke="#a0a0a0"/><path d="M1176.5 590V609" stroke="#000"/><path d="M1177.5 591V607" stroke="#fff"/><path d="M1251.5 590V608" stroke="#a0a0a0"/><path d="M1252.5 590V609" stroke="#000"/><path d="M1253.5 591V607" stroke="#fff"/><path d="M1328.5 590V608" stroke="#a0a0a0"/><path d="M1329.5 590V609" stroke="#000"/><path d="M1330.5 591V607" stroke="#fff"/><path d="M1404.5 590V608" stroke="#a0a0a0"/><path d="M1405.5 590V609" stroke="#000"/><path d="M1406.5 591V607" stroke="#fff"/><path d="M1023.500 609V739" stroke="#a0a0a0"/><path d="M1024.500 608V739" stroke="#000"/><path d="M948.500 590V739M948 590.500H1405" stroke="#a0a0a0" stroke-width="1"/><path d="M949.500 591V739M949 591.500H1023" stroke="#fff"/><path d="M949 626.5H1023" stroke="#a0a0a0"/><path d="M949 627.5H1024" stroke="#000"/><path d="M950 628.5H1023" stroke="#fff"/><path d="M1025 627.5H1405" stroke="#c0c0c0" stroke-width="1"/><path d="M949 645.5H1023" stroke="#a0a0a0"/><path d="M949 646.5H1024" stroke="#000"/><path d="M950 647.5H1023" stroke="#fff"/><path d="M1025 646.5H1405" stroke="#c0c0c0" stroke-width="1"/><path d="M949 665.5H1023" stroke="#a0a0a0"/><path d="M949 666.5H1024" stroke="#000"/><path d="M950 667.5H1023" stroke="#fff"/><path d="M1025 666.5H1405" stroke="#c0c0c0" stroke-width="1"/><path d="M949 684.5H1023" stroke="#a0a0a0"/><path d="M949 685.5H1024" stroke="#000"/><path d="M950 686.5H1023" stroke="#fff"/><path d="M1025 685.5H1405" stroke="#c0c0c0" stroke-width="1"/><path d="M949 703.5H1023" stroke="#a0a0a0"/><path d="M949 704.5H1024" stroke="#000"/><path d="M950 705.5H1023" stroke="#fff"/><path d="M1025 704.5H1405" stroke="#c0c0c0" stroke-width="1"/><path d="M949 722.5H1023" stroke="#a0a0a0"/><path d="M949 723.5H1024" stroke="#000"/><path d="M950 724.5H1023" stroke="#fff"/><path d="M1025 723.5H1405" stroke="#c0c0c0" stroke-width="1"/><path d="M1100.5 609V739" stroke="#c0c0c0" stroke-width="1"/><path d="M1176.5 609V739" stroke="#c0c0c0" stroke-width="1"/><path d="M1252.5 609V739" stroke="#c0c0c0" stroke-width="1"/><path d="M1329.5 609V739" stroke="#c0c0c0" stroke-width="1"/><path d="M1405.5 609V739" stroke="#c0c0c0" stroke-width="1"/></svg>
<div class="t" style="left:953px;top:595px;height:12px;overflow:hidden;font-size:12px;line-height:14px">对齐标注 [47]</div>
<div class="t" style="left:1028px;top:595px;height:12px;overflow:hidden;font-size:12px;line-height:14px">实测值</div>
<div class="t" style="left:1104px;top:595px;height:12px;overflow:hidden;font-size:12px;line-height:14px">标准值</div>
<div class="t" style="left:1180px;top:595px;height:12px;overflow:hidden;font-size:12px;line-height:14px">上偏差</div>
<div class="t" style="left:1256px;top:595px;height:12px;overflow:hidden;font-size:12px;line-height:14px">下偏差</div>
<div class="t" style="left:1333px;top:595px;height:12px;overflow:hidden;font-size:12px;line-height:14px">误差值</div>
<div class="t" style="left:953px;top:614px;height:12px;overflow:hidden;font-size:12px;line-height:14px">距离</div>
<div class="t" style="left:1025px;top:613px;width:70px;text-align:right;font-size:12px;line-height:14px;color:#00f;letter-spacing:-0.85px">1.4048(mm)</div>
<div class="t" style="left:1101px;top:613px;width:70px;text-align:right;font-size:12px;line-height:14px;color:#000;letter-spacing:-0.85px">0.0000(mm)</div>
<div class="t" style="left:1177px;top:613px;width:70px;text-align:right;font-size:12px;line-height:14px;color:#000;letter-spacing:-0.85px">0.0000(mm)</div>
<div class="t" style="left:1253px;top:613px;width:70px;text-align:right;font-size:12px;line-height:14px;color:#000;letter-spacing:-0.85px">0.0000(mm)</div>
<div class="t" style="left:1330px;top:613px;width:70px;text-align:right;font-size:12px;line-height:14px;color:#000;letter-spacing:-0.85px">1.4048(mm)</div>
<div style="left:1406px;top:590px;width:17px;height:149px;background:linear-gradient(90deg,#e6e6e6,#f4f4f4 40%,#f0f0f0);"></div>
<svg style="left:1410px;top:597px" width="9" height="9"><path d="M0 4.500L4 0.500L8 4.500Z" fill="#404040"/></svg>
<svg style="left:1410px;top:727px" width="9" height="9"><path d="M0 0.500H8L4 4.500Z" fill="#404040"/></svg>
<div style="left:1407px;top:608px;width:15px;height:14px;border:1px solid #8e8e8e;border-radius:2px;background:linear-gradient(90deg,#f6f6f6 0,#e4e4e4 45%,#d2d2d2 55%,#dcdcdc 100%);box-shadow:inset 0 0 0 1px #fff;"></div>
<!-- DRO -->
<div style="left:660px;top:741px;width:232px;height:1px;background:#a0a0a0;"></div>
<div style="left:660px;top:742px;width:232px;height:1px;background:#fff;"></div>
<div style="left:890px;top:741px;width:1px;height:90px;background:#a0a0a0;"></div>
<div style="left:891px;top:741px;width:1px;height:90px;background:#fff;"></div>
<div style="left:730px;top:745px;width:160px;height:85px;background:#000;"></div>
<div class="btn" style="left:666px;top:745px;width:40px;height:27px;"></div>
<div class="t" style="left:666px;top:744.5px;width:40px;text-align:center;font-size:25px;line-height:27px">X</div>
<div class="btn" style="left:707px;top:745px;width:15px;height:27px;"></div>
<svg style="left:710px;top:757px" width="9" height="5"><path d="M0.500 0h8L4.500 4.500z" fill="#000"/></svg>
<div class="t" style="left:748px;top:745px;font-size:22.500px;line-height:26px;color:#0f0;letter-spacing:0.3px;-webkit-text-stroke:0.3px #0f0">0.0010</div>
<div class="btn" style="left:666px;top:775.5px;width:40px;height:27px;"></div>
<div class="t" style="left:666px;top:775px;width:40px;text-align:center;font-size:25px;line-height:27px">Y</div>
<div class="btn" style="left:707px;top:775.5px;width:15px;height:27px;"></div>
<svg style="left:710px;top:787.5px" width="9" height="5"><path d="M0.500 0h8L4.500 4.500z" fill="#000"/></svg>
<div class="t" style="left:748px;top:775px;font-size:22.500px;line-height:26px;color:#0f0;letter-spacing:0.3px;-webkit-text-stroke:0.3px #0f0">0.0000</div>
<div class="btn" style="left:666px;top:806px;width:40px;height:27px;overflow:hidden;"></div>
<div class="t" style="left:666px;top:805.5px;width:40px;text-align:center;font-size:25px;line-height:27px">Z</div>
<div class="btn" style="left:707px;top:806px;width:15px;height:27px;"></div>
<svg style="left:710px;top:818px" width="9" height="5"><path d="M0.500 0h8L4.500 4.500z" fill="#000"/></svg>
<div class="t" style="left:748px;top:805px;font-size:22.500px;line-height:26px;color:#0f0;letter-spacing:0.3px;-webkit-text-stroke:0.3px #0f0">0.0000</div>
<div style="left:660px;top:830px;width:232px;height:40px;background:#f0f0f0;"></div>
<div style="left:660px;top:830px;width:80px;height:36px;background:#fff;"></div>
<div class="t" style="left:662px;top:833px;font-size:11px;line-height:13px;letter-spacing:-0.2px;">Ready</div>
<div style="left:739px;top:833px;width:63px;height:30px;border:1px solid;border-color:#808080 #fff #fff #808080;background:#fff;"></div>
<div style="left:740px;top:834px;width:61px;height:28px;border:1px solid;border-color:#404040 #d4d0c8 #d4d0c8 #404040;background:#fff;"></div>
<div class="t" style="left:743px;top:838px;font-size:20px;line-height:22px;line-height:22px;letter-spacing:-0.8px;">S00</div>
<div class="btn" style="left:784px;top:836px;width:16px;height:25px;"></div>
<svg style="left:788px;top:846px" width="9" height="5"><path d="M0.500 0h8L4.500 4.500z" fill="#000"/></svg>
<div style="left:812px;top:832px;width:17px;height:34px;background:#ececec;"></div>
<svg style="left:816px;top:837px" width="9" height="9"><path d="M0 4.500L4 0.500L8 4.500Z" fill="#808080"/></svg>
<svg style="left:816px;top:853px" width="9" height="9"><path d="M0 0.500H8L4 4.500Z" fill="#808080"/></svg>
<div style="left:893px;top:744px;width:150px;height:120px;background:#000;"></div>
<svg style="left:893px;top:744px" width="150" height="120" viewBox="893 744 150 120" shape-rendering="crispEdges"><path d="M910 806H1043" stroke="#f00" stroke-width="4" stroke-dasharray="12 13"/><path d="M970 754V864" stroke="#f00" stroke-width="4" stroke-dasharray="12 13"/><rect x="968" y="804" width="4" height="4" fill="#fff"/></svg>
<div style="left:1046px;top:745px;width:55px;height:86px;border:1px solid #a0a0a0;box-shadow:1px 1px 0 #fff, inset 1px 1px 0 #fff;"></div>
<div style="left:1055px;top:760px;width:12px;height:12px;border-radius:6px;background:#fff;border:1px solid;border-color:#707070 #d8d8d8 #d8d8d8 #707070;"></div>
<div style="left:1059px;top:764px;width:4px;height:4px;border-radius:2px;background:#000;"></div>
<div style="left:1055px;top:784px;width:12px;height:12px;border-radius:6px;background:#fff;border:1px solid;border-color:#707070 #d8d8d8 #d8d8d8 #707070;"></div>
<div style="left:1055px;top:809px;width:12px;height:12px;border-radius:6px;background:#fff;border:1px solid;border-color:#707070 #d8d8d8 #d8d8d8 #707070;"></div>
<div class="t" style="left:1072px;top:759px;font-size:13px;line-height:15px;">连</div>
<div class="t" style="left:1086px;top:759px;font-size:13px;line-height:15px;">续</div>
<div class="t" style="left:1072px;top:783.5px;font-size:13px;line-height:15px;">步</div>
<div class="t" style="left:1086px;top:783.5px;font-size:13px;line-height:15px;">距</div>
<div class="t" style="left:1072px;top:808px;font-size:13px;line-height:15px;">位</div>
<div class="t" style="left:1086px;top:808px;font-size:13px;line-height:15px;">置</div>
<div class="t" style="left:1103px;top:754px;font-size:13px;line-height:15px;color:#a8a8a8;">X</div>
<div style="left:1114px;top:752px;width:44px;height:19px;background:#fff;border:1px solid;border-color:#a0a0a0 #f4f4f4 #f4f4f4 #a0a0a0;box-shadow:inset 1px 1px 0 #8a8a8a;"></div>
<div class="t" style="left:1103px;top:784px;font-size:13px;line-height:15px;color:#a8a8a8;">Y</div>
<div style="left:1114px;top:782px;width:44px;height:19px;background:#fff;border:1px solid;border-color:#a0a0a0 #f4f4f4 #f4f4f4 #a0a0a0;box-shadow:inset 1px 1px 0 #8a8a8a;"></div>
<div class="t" style="left:1103px;top:814px;font-size:13px;line-height:15px;color:#a8a8a8;">Z</div>
<div style="left:1114px;top:812px;width:44px;height:19px;background:#fff;border:1px solid;border-color:#a0a0a0 #f4f4f4 #f4f4f4 #a0a0a0;box-shadow:inset 1px 1px 0 #8a8a8a;"></div>
<div style="left:1054px;top:840px;width:92px;height:12px;background:#fff;border:1px solid;border-color:#a0a0a0 #e8e8e8 #e8e8e8 #a0a0a0;"></div>
<svg style="left:1108px;top:836px" width="14" height="22" viewBox="0 0 14 22"><path d="M3.500 2.500H10.500V16.500L7 20.500L3.500 16.500Z" fill="#f0f0f0" stroke="#c8c8c8"/><path d="M10.500 3V16.500L7 20.500" fill="none" stroke="#808080"/></svg>
<div style="left:1057px;top:859px;width:1px;height:4px;background:#000;"></div>
<div style="left:1085px;top:859px;width:1px;height:4px;background:#000;"></div>
<div style="left:1114px;top:859px;width:1px;height:4px;background:#000;"></div>
<div style="left:1142px;top:859px;width:1px;height:4px;background:#000;"></div>
<div class="btn" style="left:1160px;top:743px;width:39px;height:39px;"></div>
<svg style="left:1160px;top:743px" width="39" height="39" viewBox="0 0 39 39"><path d="M1 32.500L13 22.500H38L26.500 32.500Z" fill="#7ffcfc" stroke="#000" stroke-width="1"/><path d="M21.500 5L32 14.600H26.500V24.700H16.300V14.600H10.500Z" fill="#008000"/></svg>
<div class="btn" style="left:1200px;top:743px;width:39px;height:39px;"></div>
<svg style="left:1200px;top:743px" width="39" height="39" viewBox="0 0 39 39"><path d="M20 6L34 21H27.300V35H13V21H6Z" fill="#008000"/></svg>
<div class="btn" style="left:1160px;top:783px;width:39px;height:39px;"></div>
<svg style="left:1160px;top:783px" width="39" height="39" viewBox="0 0 39 39"><path d="M5.500 21L20 7V14H34V28H20V35Z" fill="#008000"/></svg>
<div class="btn" style="left:1200px;top:783px;width:39px;height:39px;"></div>
<svg style="left:1200px;top:783px" width="39" height="39" viewBox="0 0 39 39"><path d="M20.500 5V38M4 21.500H37" stroke="#008000" stroke-width="1.300"/><path d="M20.500 2.500L18 7H23ZM20.500 39L18 35H23ZM2 21.500L6.500 19V24ZM38.500 21.500L34 19V24Z" fill="#008000"/></svg>
<div class="btn" style="left:1241px;top:783px;width:39px;height:39px;"></div>
<svg style="left:1241px;top:783px" width="39" height="39" viewBox="0 0 39 39"><path d="M35 21L20.500 7V14H6V28H20.500V35Z" fill="#008000"/></svg>
<div class="btn" style="left:1160px;top:823px;width:39px;height:39px;"></div>
<svg style="left:1160px;top:823px" width="39" height="39" viewBox="0 0 39 39"><path d="M1.500 19L13.500 9H38L27.500 19Z" fill="#7ffcfc" stroke="#000" stroke-width="1"/><path d="M19 36.400L29.400 27.700H24V17H13.600V27.700H8.400Z" fill="#008000"/></svg>
<div class="btn" style="left:1200px;top:823px;width:39px;height:39px;"></div>
<svg style="left:1200px;top:823px" width="39" height="39" viewBox="0 0 39 39"><path d="M20.800 35.500L35 20.700H27.800V7.200H13.800V20.700H6.800Z" fill="#008000"/></svg>
<div style="left:1286px;top:742px;width:100px;height:100px;background:#000;"></div>
<svg style="left:1286px;top:742px" width="100" height="100" viewBox="1286 742 100 100"><circle cx="1336" cy="792" r="49.300" fill="none" stroke="#5cc0f2" stroke-width="1.500"/><polygon points="1368.8,805.6 1361.1,817.1 1349.6,824.8 1336.0,827.5 1322.4,824.8 1310.9,817.1 1303.2,805.6 1300.5,792.0 1303.2,778.4 1310.9,766.9 1322.4,759.2 1336.0,756.5 1349.6,759.2 1361.1,766.9 1368.8,778.4 1371.5,792.0" fill="none" stroke="#5cc0f2" stroke-width="1.500"/><polygon points="1354.5,799.7 1343.7,810.5 1328.3,810.5 1317.5,799.7 1317.5,784.3 1328.3,773.5 1343.7,773.5 1354.5,784.3" fill="none" stroke="#5cc0f2" stroke-width="1.500"/><polygon points="1346.0,796.1 1340.1,802.0 1331.9,802.0 1326.0,796.1 1326.0,787.9 1331.9,782.0 1340.1,782.0 1346.0,787.9" fill="none" stroke="#5cc0f2" stroke-width="1.500"/><path d="M1354.5 799.7L1381.5 810.9" stroke="#5cc0f2" stroke-width="1.500"/><circle cx="1378.0" cy="792.0" r="3.700" fill="#ffffc4"/><path d="M1343.7 810.5L1354.9 837.5" stroke="#5cc0f2" stroke-width="1.500"/><circle cx="1365.7" cy="821.7" r="3.700" fill="#ffffc4"/><path d="M1328.3 810.5L1317.1 837.5" stroke="#5cc0f2" stroke-width="1.500"/><circle cx="1336.0" cy="834.0" r="3.700" fill="#ffffc4"/><path d="M1317.5 799.7L1290.5 810.9" stroke="#5cc0f2" stroke-width="1.500"/><circle cx="1306.3" cy="821.7" r="3.700" fill="#ffffc4"/><path d="M1317.5 784.3L1290.5 773.1" stroke="#5cc0f2" stroke-width="1.500"/><circle cx="1294.0" cy="792.0" r="3.700" fill="#ffffc4"/><path d="M1328.3 773.5L1317.1 746.5" stroke="#5cc0f2" stroke-width="1.500"/><circle cx="1306.3" cy="762.3" r="3.700" fill="#ffffc4"/><path d="M1343.7 773.5L1354.9 746.5" stroke="#5cc0f2" stroke-width="1.500"/><circle cx="1336.0" cy="750.0" r="3.700" fill="#ffffc4"/><path d="M1354.5 784.3L1381.5 773.1" stroke="#5cc0f2" stroke-width="1.500"/><circle cx="1365.7" cy="762.3" r="3.700" fill="#ffffc4"/></svg>
<div style="left:1286px;top:844px;width:99px;height:20px;background:#f4f4f4;"></div>
<div class="btn" style="left:1286px;top:844px;width:18px;height:20px;"></div>
<div class="btn" style="left:1367px;top:844px;width:18px;height:20px;"></div>
<svg style="left:1292px;top:850px" width="9" height="9"><path d="M4.500 0L0.500 4L4.500 8Z" fill="#000"/></svg>
<svg style="left:1374px;top:850px" width="9" height="9"><path d="M0.500 0L4.500 4L0.500 8Z" fill="#000"/></svg>
<div class="btn" style="left:1318px;top:844px;width:8px;height:20px;"></div>
<div style="left:1389px;top:844px;width:35px;height:20px;background:#fff;border:1px solid;border-color:#a0a0a0 #e8e8e8 #e8e8e8 #a0a0a0;"></div>
<div class="t" style="left:1392px;top:847px;font-size:12px;line-height:14px;letter-spacing:-0.5px;">64</div>
<div class="btn" style="left:1396px;top:744px;width:22px;height:22px;"></div>
<svg style="left:1396px;top:744px" width="22" height="22" viewBox="0 0 22 22"><circle cx="10.500" cy="10.500" r="8.500" fill="#f2e410" stroke="#7a7010" stroke-width="1"/><circle cx="10.500" cy="10.500" r="4" fill="#000"/><circle cx="10.500" cy="10.500" r="1.300" fill="#3a3a18"/></svg>
<div class="btn" style="left:1396px;top:770px;width:22px;height:22px;"></div>
<svg style="left:1396px;top:770px" width="22" height="22" viewBox="0 0 22 22"><rect x="2.500" y="2.500" width="16" height="16" fill="#f8f010" stroke="#0a8a14" stroke-width="1.300"/><circle cx="10.500" cy="10.500" r="4.500" fill="#000"/></svg>
<div class="btn" style="left:1396px;top:795px;width:22px;height:22px;"></div>
<svg style="left:1396px;top:795px" width="22" height="22" viewBox="0 0 22 22"><circle cx="10.500" cy="10.500" r="9" fill="#f2e410" stroke="#000" stroke-width="1"/><path d="M10.500 1.500V19.500M1.500 10.500H19.500M4.100 4.100L16.900 16.900M4.100 16.900L16.900 4.100" stroke="#000" stroke-width="1.100"/><circle cx="10.500" cy="10.500" r="4.800" fill="#000"/></svg>
<div class="btn" style="left:1396px;top:820px;width:22px;height:22px;"></div>
<svg style="left:1396px;top:820px" width="22" height="22" viewBox="0 0 22 22"><circle cx="10.500" cy="10.500" r="9.800" fill="#000"/><circle cx="10.500" cy="10.500" r="4.300" fill="#f8e810"/></svg>
<!-- status bar -->
<div style="left:4px;top:868px;width:1423px;height:17px;background:#f0f0f0;border-top:1px solid #fff;"></div>
<div style="left:4px;top:869px;width:351px;height:16px;border:1px solid;border-color:#a0a0a0 #fff #fff #a0a0a0;"></div>
<div class="t m" style="left:5px;top:869px;font-size:12px;line-height:15px">命令:请输入对齐标注第三点：</div>
<div style="left:355px;top:869px;width:100px;height:16px;border:1px solid;border-color:#a0a0a0 #fff #fff #a0a0a0;"></div>
<div class="t m" style="left:357px;top:869px;font-size:12px;line-height:15px">十字线:『开』</div>
<div style="left:455px;top:869px;width:80px;height:16px;border:1px solid;border-color:#a0a0a0 #fff #fff #a0a0a0;"></div>
<div class="t m" style="left:457px;top:869px;font-size:12px;line-height:15px">单位:『<span style="display:inline-block;width:30px;text-align:center">mm</span>』</div>
<div style="left:535px;top:869px;width:100px;height:16px;border:1px solid;border-color:#a0a0a0 #fff #fff #a0a0a0;"></div>
<div class="t m" style="left:536px;top:869px;font-size:12px;line-height:15px">对象捕获:『开启』</div>
<div style="left:635px;top:869px;width:98px;height:16px;border:1px solid;border-color:#a0a0a0 #fff #fff #a0a0a0;"></div>
<div class="t m" style="left:636px;top:869px;font-size:12px;line-height:15px">角度:『度』</div>
<div style="left:733px;top:869px;width:122px;height:16px;border:1px solid;border-color:#a0a0a0 #fff #fff #a0a0a0;"></div>
<div class="t m" style="left:736px;top:869px;font-size:12px;line-height:15px"><span style="letter-spacing:0.25px">0.0090744,0.009070</span></div>
<div style="left:852px;top:869px;width:6px;height:16px;background:#f0f0f0;"></div>
<div style="left:855px;top:869px;width:58px;height:16px;border:1px solid;border-color:#a0a0a0 #fff #fff #a0a0a0;"></div>
<div class="t m" style="left:857px;top:869px;font-size:12px;line-height:15px">夹具--关</div>
<div style="left:913px;top:869px;width:60px;height:16px;border:1px solid;border-color:#a0a0a0 #fff #fff #a0a0a0;"></div>
<div class="t m" style="left:916px;top:869px;font-size:12px;line-height:15px">标注:开</div>
<div style="left:973px;top:869px;width:100px;height:16px;border:1px solid;border-color:#a0a0a0 #fff #fff #a0a0a0;"></div>
<div class="t m" style="left:977px;top:869px;font-size:12px;line-height:15px">坐标:『世界坐标』</div>
<div style="left:1073px;top:869px;width:40px;height:16px;border:1px solid;border-color:#a0a0a0 #fff #fff #a0a0a0;"></div>
<div class="t m" style="left:1078px;top:869px;font-size:12px;line-height:15px">0</div>
<div style="left:1113px;top:869px;width:40px;height:16px;border:1px solid;border-color:#a0a0a0 #fff #fff #a0a0a0;"></div>
<div class="t m" style="left:1118px;top:869px;font-size:12px;line-height:15px">0</div>
<div style="left:1153px;top:869px;width:80px;height:16px;border:1px solid;border-color:#a0a0a0 #fff #fff #a0a0a0;"></div>
<div class="t m" style="left:1157px;top:869px;font-size:12px;line-height:15px">激光笔:『关』</div>
<div style="left:1233px;top:869px;width:190px;height:16px;border:1px solid;border-color:#a0a0a0 #fff #fff #a0a0a0;"></div>
<div class="t m" style="left:1237px;top:869px;font-size:12px;line-height:15px">虚拟摇杆:『关』</div>
</body></html>
